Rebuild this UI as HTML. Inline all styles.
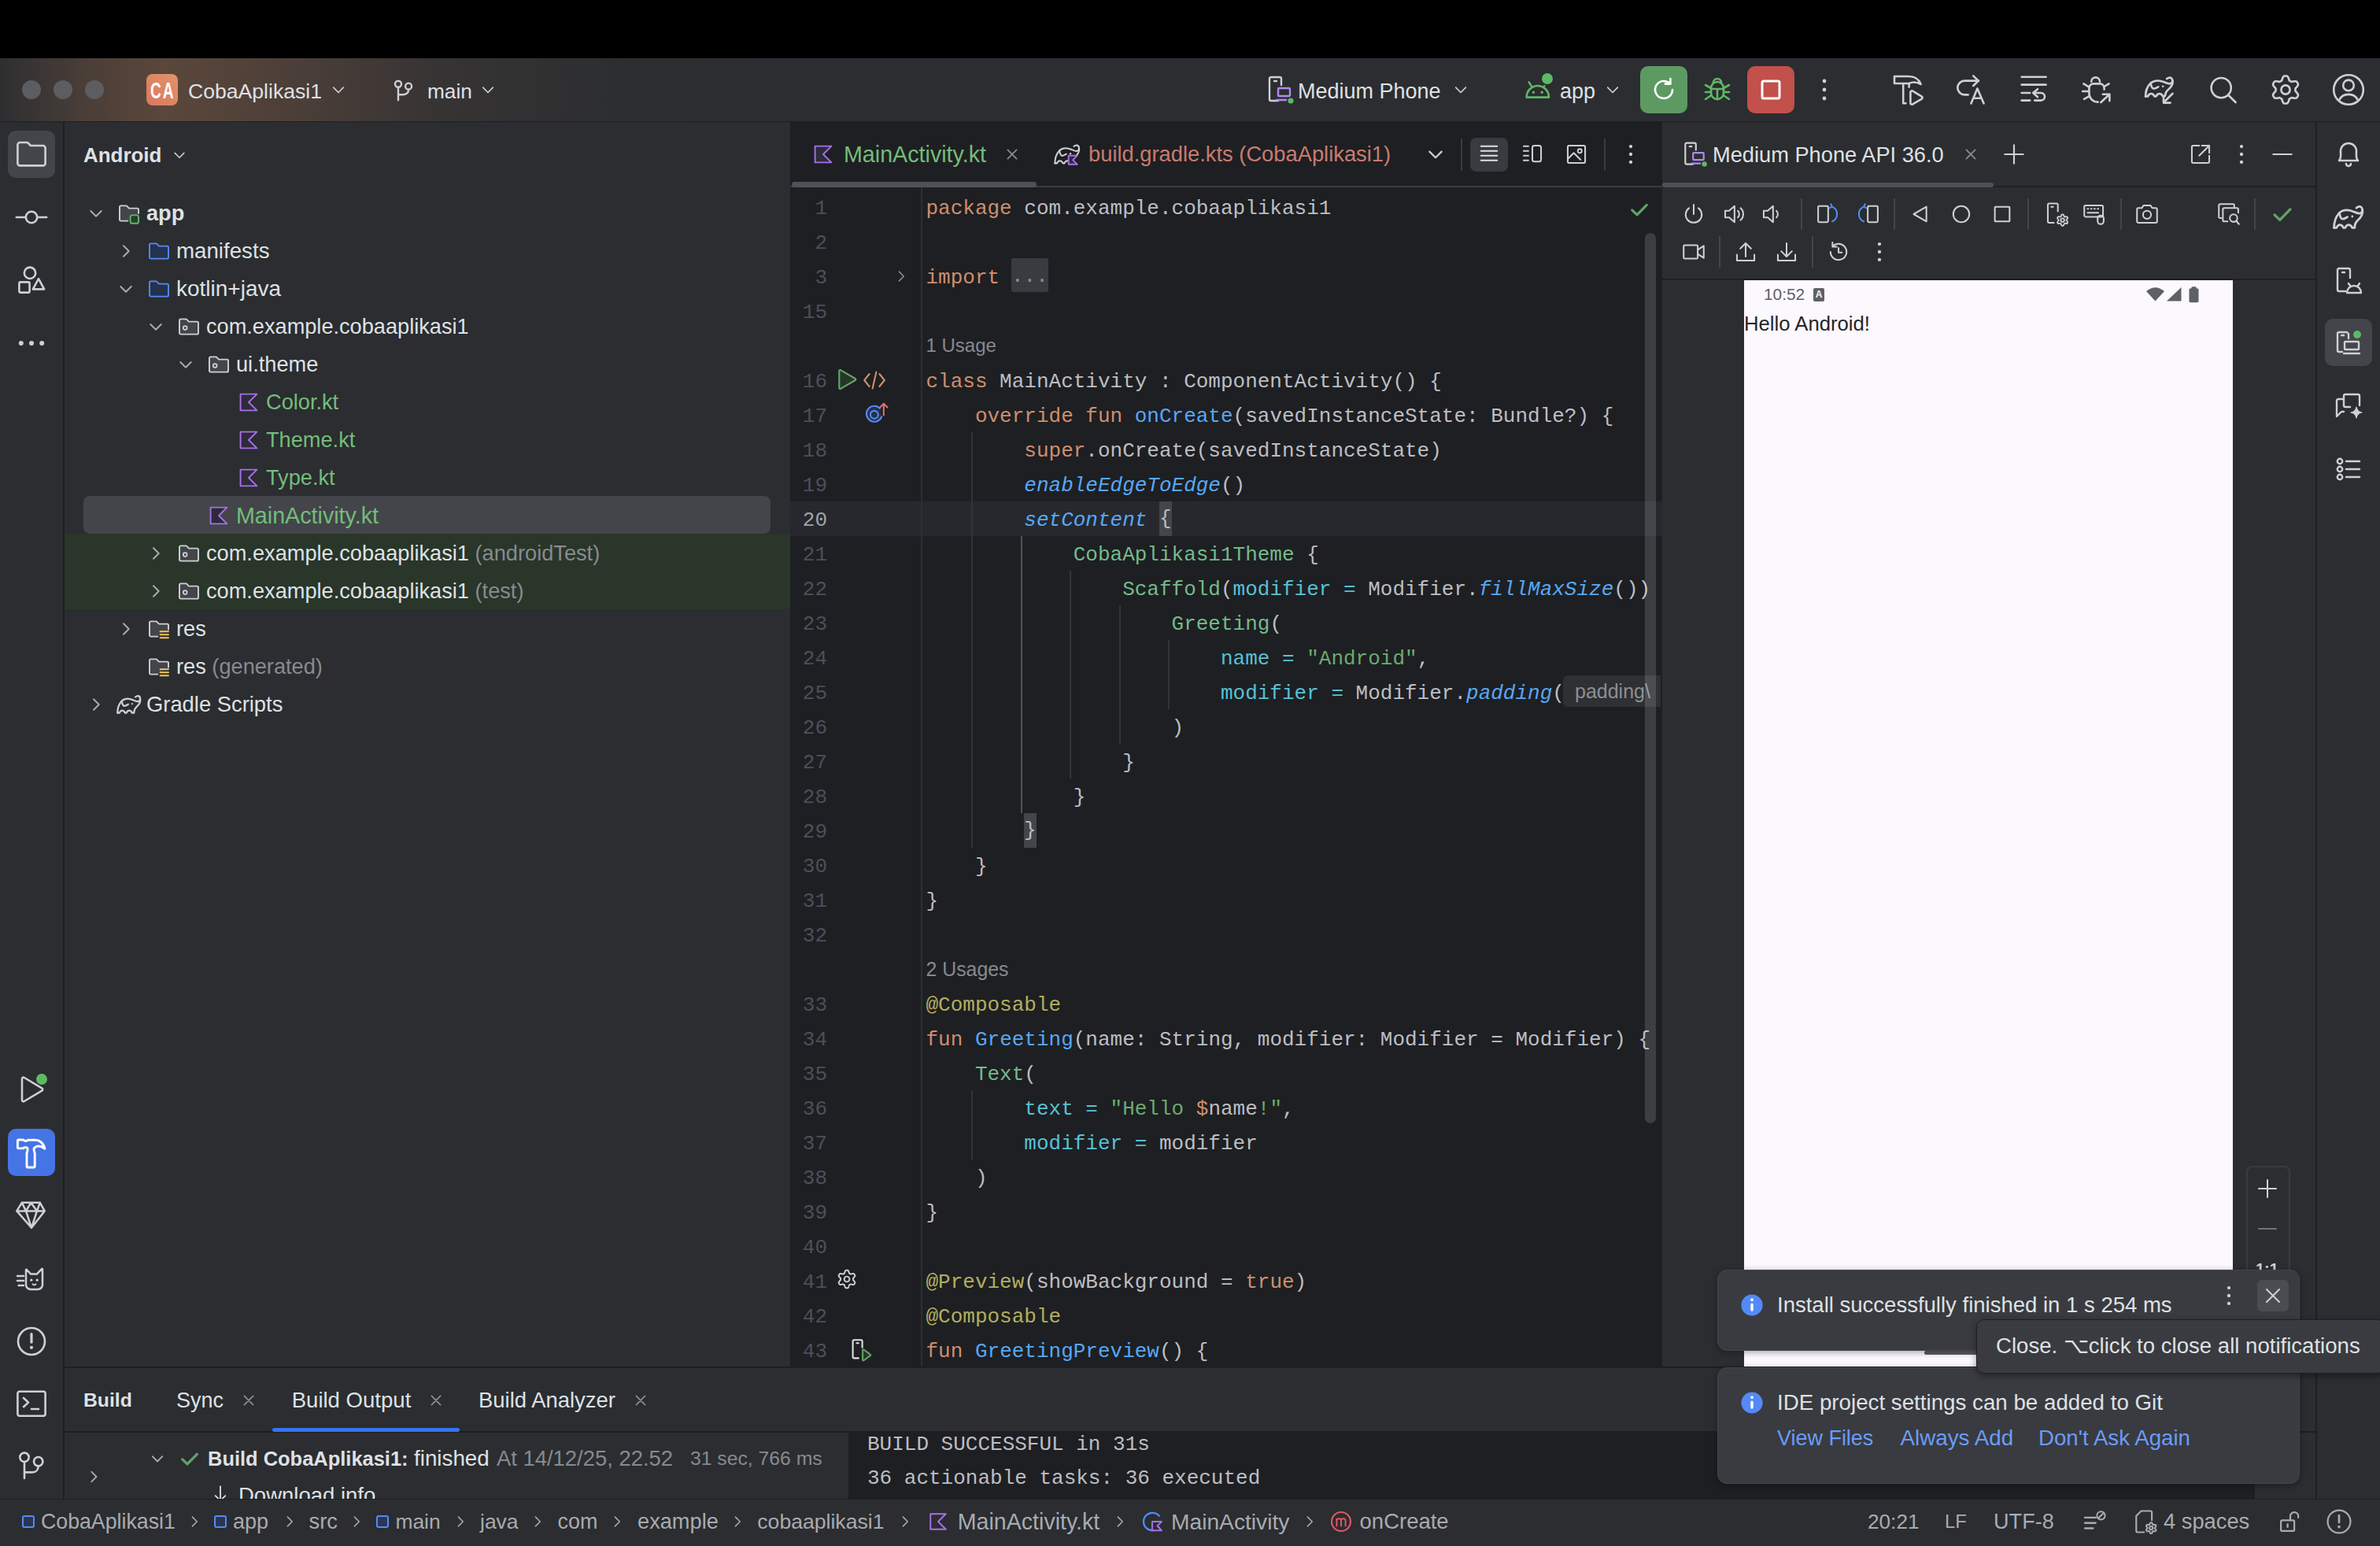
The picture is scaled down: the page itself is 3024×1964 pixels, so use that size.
<!DOCTYPE html><html><head><meta charset="utf-8"><style>html,body{margin:0;padding:0;width:3024px;height:1964px;overflow:hidden;background:#000}body{position:relative}</style></head><body><div style="position:absolute;left:0px;top:0px;width:3024px;height:1964px;background:#000;border-radius:0px;"></div>
<div style="position:absolute;left:0px;top:74px;width:3024px;height:80px;background:#2B2D30;border-radius:0px;"></div>
<div style="position:absolute;left:0px;top:74px;width:1100px;height:80px;background:linear-gradient(90deg, rgba(100,78,64,0.05) 0px, rgba(100,76,62,0.55) 110px, rgba(104,78,62,0.78) 210px, rgba(96,74,62,0.6) 380px, rgba(80,66,60,0.3) 560px, rgba(60,56,54,0.08) 780px, rgba(43,45,48,0) 950px);border-radius:0px;"></div>
<div style="position:absolute;left:0px;top:154px;width:3024px;height:1px;background:#1E1F22;border-radius:0px;"></div>
<div style="position:absolute;left:0px;top:155px;width:3024px;height:1750px;background:#2B2D30;border-radius:0px;"></div>
<div style="position:absolute;left:80px;top:155px;width:2px;height:1750px;background:#1E1F22;border-radius:0px;"></div>
<div style="position:absolute;left:2942px;top:155px;width:2px;height:1750px;background:#1E1F22;border-radius:0px;"></div>
<div style="position:absolute;left:1004px;top:155px;width:1108px;height:1582px;background:#1E1F22;border-radius:0px;"></div>
<div style="position:absolute;left:2110px;top:155px;width:2px;height:1582px;background:#1E1F22;border-radius:0px;"></div>
<div style="position:absolute;left:82px;top:1736px;width:2860px;height:2px;background:#1E1F22;border-radius:0px;"></div>
<div style="position:absolute;left:82px;top:1818px;width:2860px;height:2px;background:#1E1F22;border-radius:0px;"></div>
<div style="position:absolute;left:1078px;top:1820px;width:1787px;height:85px;background:#1E1F22;border-radius:0px;"></div>
<div style="position:absolute;left:0px;top:1904px;width:3024px;height:1px;background:#1E1F22;border-radius:0px;"></div>
<div style="position:absolute;left:0px;top:1905px;width:3024px;height:59px;background:#2B2D30;border-radius:0px;"></div>
<div style="position:absolute;left:28px;top:102px;width:24px;height:24px;background:#5B5D61;border-radius:12px;"></div>
<div style="position:absolute;left:68px;top:102px;width:24px;height:24px;background:#5B5D61;border-radius:12px;"></div>
<div style="position:absolute;left:108px;top:102px;width:24px;height:24px;background:#5B5D61;border-radius:12px;"></div>
<div style="position:absolute;left:186px;top:94px;width:40px;height:40px;background:linear-gradient(225deg,#E3936A,#D9785E);border-radius:8px;"></div>
<div style="position:absolute;left:191px;top:95.0px;height:40px;line-height:40px;font-family:'Liberation Sans', sans-serif;font-size:29px;color:#FFF;font-weight:bold;white-space:pre;transform:scaleX(0.66);transform-origin:0 50%;letter-spacing:3px">CA</div>
<div id="ma69acb43" style="position:absolute;left:239px;top:96.0px;height:40px;line-height:40px;font-family:'Liberation Sans', sans-serif;font-size:26.6px;color:#DFE1E5;font-weight:normal;white-space:pre;">CobaAplikasi1</div>
<svg style="position:absolute;left:416.0px;top:100.0px;overflow:visible;" width="28" height="28" viewBox="0 0 20 20" fill="none" stroke-linecap="round" stroke-linejoin="round"><path d="M5.5 8 L10 12.5 L14.5 8" stroke="#CED0D6" stroke-width="1.2"/></svg>
<svg style="position:absolute;left:494.0px;top:95.0px;overflow:visible;" width="38" height="38" viewBox="0 0 20 20" fill="none" stroke-linecap="round" stroke-linejoin="round"><circle cx="6.3" cy="6.2" r="2.1" stroke="#CED0D6" stroke-width="1.25"/><circle cx="13.2" cy="7.7" r="2.1" stroke="#CED0D6" stroke-width="1.25"/><path d="M6.3 8.3 V17 M6.3 13.3 H9.5 C11.8 13.3 13.2 12 13.2 9.8" stroke="#CED0D6" stroke-width="1.25"/></svg>
<div id="m93c4d54a" style="position:absolute;left:543px;top:96.0px;height:40px;line-height:40px;font-family:'Liberation Sans', sans-serif;font-size:26.22px;color:#DFE1E5;font-weight:normal;white-space:pre;">main</div>
<svg style="position:absolute;left:606.0px;top:100.0px;overflow:visible;" width="28" height="28" viewBox="0 0 20 20" fill="none" stroke-linecap="round" stroke-linejoin="round"><path d="M5.5 8 L10 12.5 L14.5 8" stroke="#CED0D6" stroke-width="1.2"/></svg>
<svg style="position:absolute;left:1606.0px;top:94.0px;overflow:visible;" width="40" height="40" viewBox="0 0 20 20" fill="none" stroke-linecap="round" stroke-linejoin="round"><path d="M9 17 H4.5 a1 1 0 0 1 -1 -1 V3 a1 1 0 0 1 1 -1 H10 a1 1 0 0 1 1 1 V7" stroke="#CED0D6" stroke-width="1.2"/><path d="M6.5 4.5 H8" stroke="#CED0D6" stroke-width="1.2"/><rect x="9" y="9" width="7.5" height="5" rx="0.5" stroke="#B18BF0" stroke-width="1.2"/><path d="M8 16.5 H17" stroke="#B18BF0" stroke-width="1.2"/><circle cx="17" cy="17" r="2.2" fill="#5FB865" stroke="#2B2D30" stroke-width="0.8"/></svg>
<div id="m9ce95f1b" style="position:absolute;left:1649px;top:96.0px;height:40px;line-height:40px;font-family:'Liberation Sans', sans-serif;font-size:27.0px;color:#DFE1E5;font-weight:normal;white-space:pre;">Medium Phone</div>
<svg style="position:absolute;left:1842.0px;top:100.0px;overflow:visible;" width="28" height="28" viewBox="0 0 20 20" fill="none" stroke-linecap="round" stroke-linejoin="round"><path d="M5.5 8 L10 12.5 L14.5 8" stroke="#CED0D6" stroke-width="1.2"/></svg>
<svg style="position:absolute;left:1934.0px;top:94.0px;overflow:visible;" width="40" height="40" viewBox="0 0 20 20" fill="none" stroke-linecap="round" stroke-linejoin="round"><path d="M2.8 14.8 A7.1 7.3 0 0 1 17 14.8 Z" stroke="#5FB865" stroke-width="1.3"/><path d="M4.3 5.2 L6.3 8.3 M15.7 5.2 L13.7 8.3" stroke="#5FB865" stroke-width="1.3"/><circle cx="7.2" cy="11.6" r="0.85" fill="#5FB865"/><circle cx="12.6" cy="11.6" r="0.85" fill="#5FB865"/></svg>
<div style="position:absolute;left:1959px;top:93px;width:14px;height:14px;background:#5FB865;border-radius:7px;box-shadow:0 0 0 2px #2B2D30"></div>
<div id="mccfd4fe5" style="position:absolute;left:1982px;top:96.0px;height:40px;line-height:40px;font-family:'Liberation Sans', sans-serif;font-size:26.97px;color:#DFE1E5;font-weight:normal;white-space:pre;">app</div>
<svg style="position:absolute;left:2035.0px;top:100.0px;overflow:visible;" width="28" height="28" viewBox="0 0 20 20" fill="none" stroke-linecap="round" stroke-linejoin="round"><path d="M5.5 8 L10 12.5 L14.5 8" stroke="#CED0D6" stroke-width="1.2"/></svg>
<div style="position:absolute;left:2084px;top:84px;width:60px;height:60px;background:#5D9A62;border-radius:10px;"></div>
<svg style="position:absolute;left:2094.0px;top:94.0px;overflow:visible;" width="40" height="40" viewBox="0 0 20 20" fill="none" stroke-linecap="round" stroke-linejoin="round"><path d="M15.5 10 a5.5 5.5 0 1 1 -1.6 -3.9" stroke="#FFFFFF" stroke-width="1.3"/><path d="M14.2 3 V6.3 H10.9" stroke="#FFFFFF" stroke-width="1.3"/></svg>
<svg style="position:absolute;left:2162.0px;top:94.0px;overflow:visible;" width="40" height="40" viewBox="0 0 20 20" fill="none" stroke-linecap="round" stroke-linejoin="round"><path d="M6 9 a4 4 0 0 1 8 0 V12 a4 4 0 0 1 -8 0 Z" stroke="#5FB865" stroke-width="1.3"/><path d="M7.5 5.5 a2.5 2.5 0 0 1 5 0" stroke="#5FB865" stroke-width="1.3"/><path d="M6 9.5 H10 H14 M2.5 7 L6 9 M17.5 7 L14 9 M2.5 11.5 H6 M17.5 11.5 H14 M2.5 16 L6.2 13.5 M17.5 16 L13.8 13.5 M10 9.5 V16" stroke="#5FB865" stroke-width="1.3"/></svg>
<div style="position:absolute;left:2220px;top:84px;width:60px;height:60px;background:#C2504B;border-radius:10px;"></div>
<svg style="position:absolute;left:2230.0px;top:94.0px;overflow:visible;" width="40" height="40" viewBox="0 0 20 20" fill="none" stroke-linecap="round" stroke-linejoin="round"><rect x="4.5" y="4.5" width="11" height="11" rx="1" stroke="#FFFFFF" stroke-width="1.5"/></svg>
<svg style="position:absolute;left:2298.0px;top:94.0px;overflow:visible;" width="40" height="40" viewBox="0 0 20 20" fill="none" stroke-linecap="round" stroke-linejoin="round"><circle cx="10" cy="4.5" r="1.2" fill="#CED0D6"/><circle cx="10" cy="10" r="1.2" fill="#CED0D6"/><circle cx="10" cy="15.5" r="1.2" fill="#CED0D6"/></svg>
<svg style="position:absolute;left:2405.0px;top:94.0px;overflow:visible;" width="40" height="40" viewBox="0 0 20 20" fill="none" stroke-linecap="round" stroke-linejoin="round"><path d="M1 1.5 H10 C13.5 1.5 16.5 3 17.8 6.5 C15.5 5.2 12.5 5 10.3 6 H1 Z" stroke="#CED0D6" stroke-width="1.3"/><path d="M6.6 6.2 V18.6 H8.2 M10.3 6.2 V8.3" stroke="#CED0D6" stroke-width="1.3"/><path d="M11.2 11.6 a0.9 0.9 0 0 1 1.4 -0.8 L18.4 14.3 a0.9 0.9 0 0 1 0 1.5 L12.6 19.2 a0.9 0.9 0 0 1 -1.4 -0.8 Z" stroke="#CED0D6" stroke-width="1.3"/></svg>
<svg style="position:absolute;left:2484.0px;top:94.0px;overflow:visible;" width="40" height="40" viewBox="0 0 20 20" fill="none" stroke-linecap="round" stroke-linejoin="round"><path d="M8.3 13.2 H6.1 A4.45 4.45 0 0 1 6.1 4.3 H15" stroke="#CED0D6" stroke-width="1.3"/><path d="M11.6 1.2 L14.9 4.3 L11.6 7.5" stroke="#CED0D6" stroke-width="1.3"/><path d="M10.2 18.7 L14.2 9.2 L18.3 18.7 M11.6 15.4 H16.8" stroke="#CED0D6" stroke-width="1.3"/></svg>
<svg style="position:absolute;left:2564.0px;top:94.0px;overflow:visible;" width="40" height="40" viewBox="0 0 20 20" fill="none" stroke-linecap="round" stroke-linejoin="round"><path d="M2.3 1.9 H17.8 M2.3 6.8 H17.8 M2.3 12 H7.6 M2.3 16.8 H7.6" stroke="#CED0D6" stroke-width="1.3"/><path d="M12.5 9.6 L9.6 12 L12.5 14.6 M9.6 12 H14.6 A2.4 2.4 0 0 1 14.6 16.8 H10.6" stroke="#CED0D6" stroke-width="1.3"/></svg>
<svg style="position:absolute;left:2644.0px;top:94.0px;overflow:visible;" width="40" height="40" viewBox="0 0 20 20" fill="none" stroke-linecap="round" stroke-linejoin="round"><path d="M6.6 4.9 A2.7 2.7 0 0 1 12 4.9" stroke="#CED0D6" stroke-width="1.3"/><path d="M10.8 17.8 C7.5 17.8 5.2 15.5 5.2 12 V9 C5.2 7.3 6.5 6.2 8 6.2 H12 C13.5 6.2 14.8 7.3 14.8 9 V9.8" stroke="#CED0D6" stroke-width="1.3"/><path d="M1.7 6.2 L5.2 8.3 M1.1 11 H5.2 M2 15.9 L5.4 14.1 M17.8 6.2 L14.8 8" stroke="#CED0D6" stroke-width="1.3"/><path d="M12.7 18 L18.2 12.9 M13.9 12.9 H18.2 V17.1" stroke="#CED0D6" stroke-width="1.3"/></svg>
<svg style="position:absolute;left:2724.0px;top:94.0px;overflow:visible;" width="40" height="40" viewBox="0 0 20 20" fill="none" stroke-linecap="round" stroke-linejoin="round"><g transform="translate(0.3,-0.5) scale(0.95,0.88)"><path d="M0.8 16.7 C0.8 12 2.5 9 4.2 7.2 C6 5.5 9 5 12 6 C14 6.6 15.5 7.6 16.8 7.6 C18.3 7.6 18.8 6.5 18.8 5.3 C18.8 3.9 17.8 3.2 16.9 3.2 C16 3.2 15.4 3.7 15 4.1" stroke="#CED0D6" stroke-width="1.45"/><path d="M18.9 5.5 C19.3 8.5 17.5 10.5 15.8 12 C14.5 13.2 13.9 14.5 13.9 16.7 H12.4 C11.8 15.3 11 14.8 10.1 14.8 C9.2 14.8 8.4 15.3 7.9 16.7 H6.8 C6.2 15.3 5.4 14.8 4.5 14.8 C3.6 14.8 2.9 15.3 2.4 16.7 H0.8" stroke="#CED0D6" stroke-width="1.45"/><path d="M4.2 7.2 C4.5 9 4.8 11 6.2 11.1 C7.3 11.2 8.3 10.4 9.3 9.8" stroke="#CED0D6" stroke-width="1.45"/><circle cx="12.4" cy="9.5" r="0.7" fill="#CED0D6"/></g><path d="M18.3 12.4 L12.5 18.1" stroke="#2B2D30" stroke-width="3.5"/><path d="M18.3 12.4 L12.5 18.1 M12.5 14 V18.3 H16.8" stroke="#CED0D6" stroke-width="1.3"/></svg>
<svg style="position:absolute;left:2804.0px;top:94.0px;overflow:visible;" width="40" height="40" viewBox="0 0 20 20" fill="none" stroke-linecap="round" stroke-linejoin="round"><circle cx="9.1" cy="8.8" r="6.3" stroke="#CED0D6" stroke-width="1.3"/><path d="M13.6 13.4 L18.3 18" stroke="#CED0D6" stroke-width="1.3"/></svg>
<svg style="position:absolute;left:2884.0px;top:94.0px;overflow:visible;" width="40" height="40" viewBox="0 0 20 20" fill="none" stroke-linecap="round" stroke-linejoin="round"><path d="M10.00 1.25 L10.38 1.26 L10.76 1.28 L11.13 1.38 L11.45 1.78 L11.72 2.25 L11.94 2.76 L12.12 3.26 L12.28 3.75 L12.41 4.17 L12.64 4.34 L12.89 4.46 L13.12 4.59 L13.36 4.73 L13.58 4.88 L13.84 5.00 L14.28 4.90 L14.77 4.79 L15.30 4.70 L15.85 4.64 L16.39 4.64 L16.90 4.71 L17.17 4.98 L17.38 5.30 L17.58 5.62 L17.76 5.96 L17.93 6.30 L18.03 6.67 L17.84 7.15 L17.57 7.61 L17.24 8.06 L16.90 8.47 L16.56 8.84 L16.25 9.18 L16.23 9.46 L16.24 9.73 L16.25 10.00 L16.24 10.27 L16.23 10.54 L16.25 10.82 L16.56 11.16 L16.90 11.53 L17.24 11.94 L17.57 12.39 L17.84 12.85 L18.03 13.33 L17.93 13.70 L17.76 14.04 L17.58 14.37 L17.38 14.70 L17.17 15.02 L16.90 15.29 L16.39 15.36 L15.85 15.36 L15.30 15.30 L14.77 15.21 L14.28 15.10 L13.84 15.00 L13.58 15.12 L13.36 15.27 L13.13 15.41 L12.89 15.54 L12.64 15.66 L12.41 15.83 L12.28 16.25 L12.12 16.74 L11.94 17.24 L11.72 17.75 L11.45 18.22 L11.13 18.62 L10.76 18.72 L10.38 18.74 L10.00 18.75 L9.62 18.74 L9.24 18.72 L8.87 18.62 L8.55 18.22 L8.28 17.75 L8.06 17.24 L7.88 16.74 L7.72 16.25 L7.59 15.83 L7.36 15.66 L7.11 15.54 L6.87 15.41 L6.64 15.27 L6.42 15.12 L6.16 15.00 L5.72 15.10 L5.23 15.21 L4.70 15.30 L4.15 15.36 L3.61 15.36 L3.10 15.29 L2.83 15.02 L2.62 14.70 L2.42 14.38 L2.24 14.04 L2.07 13.70 L1.97 13.33 L2.16 12.85 L2.43 12.39 L2.76 11.94 L3.10 11.53 L3.44 11.16 L3.75 10.82 L3.77 10.54 L3.76 10.27 L3.75 10.00 L3.76 9.73 L3.77 9.46 L3.75 9.18 L3.44 8.84 L3.10 8.47 L2.76 8.06 L2.43 7.61 L2.16 7.15 L1.97 6.67 L2.07 6.30 L2.24 5.96 L2.42 5.63 L2.62 5.30 L2.83 4.98 L3.10 4.71 L3.61 4.64 L4.15 4.64 L4.70 4.70 L5.23 4.79 L5.72 4.90 L6.16 5.00 L6.42 4.88 L6.64 4.73 L6.88 4.59 L7.11 4.46 L7.36 4.34 L7.59 4.17 L7.72 3.75 L7.88 3.26 L8.06 2.76 L8.28 2.25 L8.55 1.78 L8.87 1.38 L9.24 1.28 L9.62 1.26Z" stroke="#CED0D6" stroke-width="1.3" stroke-linejoin="round"/><circle cx="10" cy="10" r="2.8" stroke="#CED0D6" stroke-width="1.3"/></svg>
<svg style="position:absolute;left:2964.0px;top:94.0px;overflow:visible;" width="40" height="40" viewBox="0 0 20 20" fill="none" stroke-linecap="round" stroke-linejoin="round"><circle cx="10" cy="10" r="9.4" stroke="#CED0D6" stroke-width="1.3"/><circle cx="10" cy="7.2" r="3.4" stroke="#CED0D6" stroke-width="1.3"/><path d="M4.2 16.3 C6.5 11.8 13.5 11.8 15.8 16.3" stroke="#CED0D6" stroke-width="1.3"/></svg>
<div style="position:absolute;left:10px;top:166px;width:60px;height:60px;background:#43454A;border-radius:10px;"></div>
<svg style="position:absolute;left:20.0px;top:175.0px;overflow:visible;" width="40" height="40" viewBox="0 0 20 20" fill="none" stroke-linecap="round" stroke-linejoin="round"><path d="M1.2 4.5 a1.5 1.5 0 0 1 1.5 -1.5 H7.5 L9.5 5 H17.3 a1.5 1.5 0 0 1 1.5 1.5 V16.2 a1.5 1.5 0 0 1 -1.5 1.5 H2.7 a1.5 1.5 0 0 1 -1.5 -1.5 Z" stroke="#CED0D6" fill="none" stroke-width="1.3"/></svg>
<svg style="position:absolute;left:20.0px;top:256.0px;overflow:visible;" width="40" height="40" viewBox="0 0 20 20" fill="none" stroke-linecap="round" stroke-linejoin="round"><circle cx="10" cy="10" r="3.6" stroke="#CED0D6" stroke-width="1.3"/><path d="M0.4 10 H6.4 M13.6 10 H19.6" stroke="#CED0D6" stroke-width="1.3"/></svg>
<svg style="position:absolute;left:20.0px;top:335.0px;overflow:visible;" width="40" height="40" viewBox="0 0 20 20" fill="none" stroke-linecap="round" stroke-linejoin="round"><circle cx="9" cy="5.9" r="3.6" stroke="#CED0D6" stroke-width="1.3"/><rect x="2.2" y="11.7" width="6.6" height="6.6" rx="0.8" stroke="#CED0D6" stroke-width="1.3"/><path d="M14.5 9.6 L18.1 16.2 H10.9 Z" stroke="#CED0D6" stroke-width="1.3"/></svg>
<svg style="position:absolute;left:20.0px;top:416.0px;overflow:visible;" width="40" height="40" viewBox="0 0 20 20" fill="none" stroke-linecap="round" stroke-linejoin="round"><circle cx="3.4" cy="10" r="1.5" fill="#CED0D6"/><circle cx="10" cy="10" r="1.5" fill="#CED0D6"/><circle cx="16.6" cy="10" r="1.5" fill="#CED0D6"/></svg>
<svg style="position:absolute;left:20.0px;top:1364.0px;overflow:visible;" width="40" height="40" viewBox="0 0 20 20" fill="none" stroke-linecap="round" stroke-linejoin="round"><path d="M4 3.3 a0.9 0.9 0 0 1 1.4 -0.8 L16.6 9.2 a0.9 0.9 0 0 1 0 1.6 L5.4 17.5 a0.9 0.9 0 0 1 -1.4 -0.8 Z" stroke="#CED0D6" stroke-width="1.3"/></svg>
<div style="position:absolute;left:45.6px;top:1364.3px;width:14px;height:14px;background:#5FB865;border-radius:7px;"></div>
<div style="position:absolute;left:10px;top:1434px;width:60px;height:60px;background:#4574E5;border-radius:10px;"></div>
<svg style="position:absolute;left:20.0px;top:1445.5px;overflow:visible;" width="40" height="40" viewBox="0 0 20 20" fill="none" stroke-linecap="round" stroke-linejoin="round"><path d="M1.2 1.5 a0.5 0.5 0 0 1 0.5 -0.5 H4.8 L5.5 1.6 H7 L7.8 1.1 H12 C15 1.1 17.5 3 18.5 6.6 C16.5 5.2 14.5 4.8 13.2 5.2 L11.6 6.2 V7.8 L12.1 9.5 V18 a0.5 0.5 0 0 1 -0.5 0.5 H7.5 a0.5 0.5 0 0 1 -0.5 -0.5 V9.5 L7.5 7.8 V6.4 L6.8 5.8 H5.5 L4.8 6.45 H1.7 a0.5 0.5 0 0 1 -0.5 -0.5 Z" stroke="#FFFFFF" stroke-width="1.45"/></svg>
<svg style="position:absolute;left:20.0px;top:1523.0px;overflow:visible;" width="40" height="40" viewBox="0 0 20 20" fill="none" stroke-linecap="round" stroke-linejoin="round"><path d="M3.9 2.4 H15.4 L18.35 7.7 L10 18.4 L0.65 7.7 Z M0.65 7.7 H18.35 M6.5 7.7 L10 18.4 L13.5 7.7 M3.9 2.4 L6.5 7.7 L9.65 2.4 L13.5 7.7 L15.4 2.4" stroke="#CED0D6" stroke-width="1.25"/></svg>
<svg style="position:absolute;left:20.0px;top:1605.0px;overflow:visible;" width="40" height="40" viewBox="0 0 20 20" fill="none" stroke-linecap="round" stroke-linejoin="round"><path d="M7 4 L9.6 6.8 H13.4 L16.5 3.5 a0.3 0.3 0 0 1 0.5 0.2 V13.5 a3 3 0 0 1 -3 3 H9.5 a3 3 0 0 1 -3 -3 V4.3 a0.3 0.3 0 0 1 0.5 -0.3 Z" stroke="#CED0D6" stroke-width="1.25"/><path d="M1 8 H5 M1 11 H5 M1.8 14 H5" stroke="#CED0D6" stroke-width="1.25"/><circle cx="9.9" cy="10.6" r="0.8" fill="#CED0D6"/><circle cx="13.6" cy="10.6" r="0.8" fill="#CED0D6"/><path d="M10.8 13.2 Q11.75 14.2 12.7 13.2" stroke="#CED0D6" stroke-width="1"/></svg>
<svg style="position:absolute;left:20.0px;top:1684.0px;overflow:visible;" width="40" height="40" viewBox="0 0 20 20" fill="none" stroke-linecap="round" stroke-linejoin="round"><circle cx="10" cy="10" r="8.5" stroke="#CED0D6" stroke-width="1.3"/><path d="M10 5.3 V10.6" stroke="#CED0D6" stroke-width="1.6"/><circle cx="10" cy="13.9" r="1.05" fill="#CED0D6"/></svg>
<svg style="position:absolute;left:20.0px;top:1764.0px;overflow:visible;" width="40" height="40" viewBox="0 0 20 20" fill="none" stroke-linecap="round" stroke-linejoin="round"><rect x="1.2" y="1.9" width="17.6" height="15.45" rx="1.2" stroke="#CED0D6" stroke-width="1.3"/><path d="M5 6 L8 8.8 L5 11.6 M10 13 H14.5" stroke="#CED0D6" stroke-width="1.3"/></svg>
<svg style="position:absolute;left:20.0px;top:1842.0px;overflow:visible;" width="40" height="40" viewBox="0 0 20 20" fill="none" stroke-linecap="round" stroke-linejoin="round"><circle cx="5.5" cy="4.65" r="2.85" stroke="#CED0D6" stroke-width="1.3"/><circle cx="14.35" cy="7.35" r="2.85" stroke="#CED0D6" stroke-width="1.3"/><path d="M5.5 7.5 V18 M5.5 14.2 H10.5 C12.8 14.2 14.35 12.6 14.35 10.2" stroke="#CED0D6" stroke-width="1.3"/></svg>
<svg style="position:absolute;left:2964.0px;top:175.0px;overflow:visible;" width="40" height="40" viewBox="0 0 20 20" fill="none" stroke-linecap="round" stroke-linejoin="round"><path d="M4 14.5 C5.5 13 5 11 5 8.5 a5 5 0 0 1 10 0 C15 11 14.5 13 16 14.5 Z" stroke="#CED0D6" stroke-width="1.3"/><path d="M8.5 16.5 a1.5 1.5 0 0 0 3 0" stroke="#CED0D6" stroke-width="1.3"/></svg>
<svg style="position:absolute;left:2964.0px;top:256.0px;overflow:visible;" width="40" height="40" viewBox="0 0 20 20" fill="none" stroke-linecap="round" stroke-linejoin="round"><path d="M0.8 16.7 C0.8 12 2.5 9 4.2 7.2 C6 5.5 9 5 12 6 C14 6.6 15.5 7.6 16.8 7.6 C18.3 7.6 18.8 6.5 18.8 5.3 C18.8 3.9 17.8 3.2 16.9 3.2 C16 3.2 15.4 3.7 15 4.1" stroke="#CED0D6" stroke-width="1.4"/><path d="M18.9 5.5 C19.3 8.5 17.5 10.5 15.8 12 C14.5 13.2 13.9 14.5 13.9 16.7 H12.4 C11.8 15.3 11 14.8 10.1 14.8 C9.2 14.8 8.4 15.3 7.9 16.7 H6.8 C6.2 15.3 5.4 14.8 4.5 14.8 C3.6 14.8 2.9 15.3 2.4 16.7 H0.8" stroke="#CED0D6" stroke-width="1.4"/><path d="M4.2 7.2 C4.5 9 4.8 11 6.2 11.1 C7.3 11.2 8.3 10.4 9.3 9.8" stroke="#CED0D6" stroke-width="1.4"/><circle cx="12.4" cy="9.5" r="0.7" fill="#CED0D6"/></svg>
<svg style="position:absolute;left:2964.0px;top:337.0px;overflow:visible;" width="40" height="40" viewBox="0 0 20 20" fill="none" stroke-linecap="round" stroke-linejoin="round"><path d="M8 16.5 H4 a1 1 0 0 1 -1 -1 V3 a1 1 0 0 1 1 -1 H10 a1 1 0 0 1 1 1 V8" stroke="#CED0D6" stroke-width="1.2"/><path d="M6 4.5 H7.5" stroke="#CED0D6" stroke-width="1.2"/><path d="M9 17.5 a4.5 4.5 0 0 1 9 0 Z M10 11.5 L11 13 M17 11.5 L16 13" stroke="#CED0D6" stroke-width="1.2"/></svg>
<div style="position:absolute;left:2954px;top:405px;width:60px;height:60px;background:#43454A;border-radius:10px;"></div>
<svg style="position:absolute;left:2964.0px;top:416.0px;overflow:visible;" width="40" height="40" viewBox="0 0 20 20" fill="none" stroke-linecap="round" stroke-linejoin="round"><path d="M6 15.5 H4 a1 1 0 0 1 -1 -1 V4 a1 1 0 0 1 1 -1 H9 L10 4 V7" stroke="#CED0D6" stroke-width="1.2"/><path d="M5.5 5 H7" stroke="#CED0D6" stroke-width="1.2"/><rect x="7.5" y="9" width="9" height="5" rx="0.5" stroke="#CED0D6" stroke-width="1.2"/><path d="M7 16.5 H17" stroke="#CED0D6" stroke-width="1.2"/><circle cx="15.5" cy="4.5" r="2.5" fill="#5FB865"/></svg>
<svg style="position:absolute;left:2964.0px;top:495.0px;overflow:visible;" width="40" height="40" viewBox="0 0 20 20" fill="none" stroke-linecap="round" stroke-linejoin="round"><path d="M7 6 H3.5 a1 1 0 0 0 -1 1 V17 L5.5 14 H7" stroke="#CED0D6" stroke-width="1.2"/><path d="M8 3 H16 a1 1 0 0 1 1 1 V10 M8 3 a1 1 0 0 0 -1 1 V10 a1 1 0 0 0 1 1 H11" stroke="#CED0D6" stroke-width="1.2"/><path d="M15 11 Q15.5 14 18.5 14.5 Q15.5 15 15 18 Q14.5 15 11.5 14.5 Q14.5 14 15 11 Z" fill="#CED0D6" stroke="#CED0D6" stroke-width="0.6"/></svg>
<svg style="position:absolute;left:2964.0px;top:576.0px;overflow:visible;" width="40" height="40" viewBox="0 0 20 20" fill="none" stroke-linecap="round" stroke-linejoin="round"><circle cx="4.5" cy="5" r="1.6" stroke="#CED0D6" stroke-width="1.2"/><circle cx="4.5" cy="10" r="1.6" stroke="#CED0D6" stroke-width="1.2"/><circle cx="4.5" cy="15" r="1.6" stroke="#CED0D6" stroke-width="1.2"/><path d="M8.5 5 H17 M8.5 10 H17 M8.5 15 H17" stroke="#CED0D6" stroke-width="1.3"/></svg>
<div id="mb31fb8c4" style="position:absolute;left:106px;top:177.0px;height:40px;line-height:40px;font-family:'Liberation Sans', sans-serif;font-size:25.94px;color:#DFE1E5;font-weight:bold;white-space:pre;">Android</div>
<svg style="position:absolute;left:215.0px;top:184.0px;overflow:visible;" width="26" height="26" viewBox="0 0 20 20" fill="none" stroke-linecap="round" stroke-linejoin="round"><path d="M5.5 8 L10 12.5 L14.5 8" stroke="#CED0D6" stroke-width="1.2"/></svg>
<div style="position:absolute;left:82px;top:678px;width:922px;height:96px;background:#293629;border-radius:0px;"></div>
<div style="position:absolute;left:106px;top:630px;width:873px;height:48px;background:#43454A;border-radius:8px;"></div>
<svg style="position:absolute;left:106.6px;top:256.0px;overflow:visible;" width="30" height="30" viewBox="0 0 20 20" fill="none" stroke-linecap="round" stroke-linejoin="round"><path d="M5.5 8 L10 12.5 L14.5 8" stroke="#A8ABB0" stroke-width="1.3"/></svg>
<svg style="position:absolute;left:148.0px;top:255.0px;overflow:visible;" width="32" height="32" viewBox="0 0 20 20" fill="none" stroke-linecap="round" stroke-linejoin="round"><path d="M9 16 H3.5 a1 1 0 0 1 -1 -1 V5 a1 1 0 0 1 1 -1 H8 L10 6 H16.5 a1 1 0 0 1 1 1 V10" stroke="#CED0D6" fill="#43454A" stroke-width="1.2"/><rect x="11" y="11.5" width="6.5" height="6.5" rx="1.5" stroke="#5FB865" fill="#2B3A2E" stroke-width="1.2"/></svg>
<div style="position:absolute;left:186px;top:251.0px;height:40px;line-height:40px;font-family:'Liberation Sans', sans-serif;font-size:27.2px;color:#DFE1E5;font-weight:normal;white-space:pre;"><span style="color:#DFE1E5;font-weight:bold">app</span></div>
<svg style="position:absolute;left:144.6px;top:304.0px;overflow:visible;" width="30" height="30" viewBox="0 0 20 20" fill="none" stroke-linecap="round" stroke-linejoin="round"><path d="M8 5.5 L12.5 10 L8 14.5" stroke="#A8ABB0" stroke-width="1.3"/></svg>
<svg style="position:absolute;left:186.0px;top:303.0px;overflow:visible;" width="32" height="32" viewBox="0 0 20 20" fill="none" stroke-linecap="round" stroke-linejoin="round"><path d="M2.5 5 a1 1 0 0 1 1 -1 H8 L10 6 H16.5 a1 1 0 0 1 1 1 V15 a1 1 0 0 1 -1 1 H3.5 a1 1 0 0 1 -1 -1 Z" stroke="#548AF7" fill="#25324D" stroke-width="1.2"/></svg>
<div id="m243ea7fe" style="position:absolute;left:224px;top:299.0px;height:40px;line-height:40px;font-family:'Liberation Sans', sans-serif;font-size:27.7px;color:#DFE1E5;font-weight:normal;white-space:pre;"><span style="color:#DFE1E5;font-weight:normal">manifests</span></div>
<svg style="position:absolute;left:144.6px;top:352.0px;overflow:visible;" width="30" height="30" viewBox="0 0 20 20" fill="none" stroke-linecap="round" stroke-linejoin="round"><path d="M5.5 8 L10 12.5 L14.5 8" stroke="#A8ABB0" stroke-width="1.3"/></svg>
<svg style="position:absolute;left:186.0px;top:351.0px;overflow:visible;" width="32" height="32" viewBox="0 0 20 20" fill="none" stroke-linecap="round" stroke-linejoin="round"><path d="M2.5 5 a1 1 0 0 1 1 -1 H8 L10 6 H16.5 a1 1 0 0 1 1 1 V15 a1 1 0 0 1 -1 1 H3.5 a1 1 0 0 1 -1 -1 Z" stroke="#548AF7" fill="#25324D" stroke-width="1.2"/></svg>
<div id="m9104080c" style="position:absolute;left:224px;top:347.0px;height:40px;line-height:40px;font-family:'Liberation Sans', sans-serif;font-size:27.99px;color:#DFE1E5;font-weight:normal;white-space:pre;"><span style="color:#DFE1E5;font-weight:normal">kotlin+java</span></div>
<svg style="position:absolute;left:182.6px;top:400.0px;overflow:visible;" width="30" height="30" viewBox="0 0 20 20" fill="none" stroke-linecap="round" stroke-linejoin="round"><path d="M5.5 8 L10 12.5 L14.5 8" stroke="#A8ABB0" stroke-width="1.3"/></svg>
<svg style="position:absolute;left:224.0px;top:399.0px;overflow:visible;" width="32" height="32" viewBox="0 0 20 20" fill="none" stroke-linecap="round" stroke-linejoin="round"><path d="M2.5 5 a1 1 0 0 1 1 -1 H8 L10 6 H16.5 a1 1 0 0 1 1 1 V15 a1 1 0 0 1 -1 1 H3.5 a1 1 0 0 1 -1 -1 Z" stroke="#CED0D6" fill="#43454A" stroke-width="1.2"/><circle cx="7" cy="11" r="1.5" stroke="#CED0D6" stroke-width="1.1"/></svg>
<div id="m0665bff7" style="position:absolute;left:262px;top:395.0px;height:40px;line-height:40px;font-family:'Liberation Sans', sans-serif;font-size:27.17px;color:#DFE1E5;font-weight:normal;white-space:pre;"><span style="color:#DFE1E5;font-weight:normal">com.example.cobaaplikasi1</span></div>
<svg style="position:absolute;left:220.6px;top:448.0px;overflow:visible;" width="30" height="30" viewBox="0 0 20 20" fill="none" stroke-linecap="round" stroke-linejoin="round"><path d="M5.5 8 L10 12.5 L14.5 8" stroke="#A8ABB0" stroke-width="1.3"/></svg>
<svg style="position:absolute;left:262.0px;top:447.0px;overflow:visible;" width="32" height="32" viewBox="0 0 20 20" fill="none" stroke-linecap="round" stroke-linejoin="round"><path d="M2.5 5 a1 1 0 0 1 1 -1 H8 L10 6 H16.5 a1 1 0 0 1 1 1 V15 a1 1 0 0 1 -1 1 H3.5 a1 1 0 0 1 -1 -1 Z" stroke="#CED0D6" fill="#43454A" stroke-width="1.2"/><circle cx="7" cy="11" r="1.5" stroke="#CED0D6" stroke-width="1.1"/></svg>
<div style="position:absolute;left:300px;top:443.0px;height:40px;line-height:40px;font-family:'Liberation Sans', sans-serif;font-size:27.2px;color:#DFE1E5;font-weight:normal;white-space:pre;"><span style="color:#DFE1E5;font-weight:normal">ui.theme</span></div>
<svg style="position:absolute;left:300.0px;top:495.0px;overflow:visible;" width="32" height="32" viewBox="0 0 20 20" fill="none" stroke-linecap="round" stroke-linejoin="round"><path d="M3.5 3.5 H16.5 L10 10 L16.5 16.5 H3.5 Z" stroke="#A571E6" fill="#2F2A3A" stroke-width="1.2"/></svg>
<div style="position:absolute;left:338px;top:491.0px;height:40px;line-height:40px;font-family:'Liberation Sans', sans-serif;font-size:27.2px;color:#DFE1E5;font-weight:normal;white-space:pre;"><span style="color:#73BD79;font-weight:normal">Color.kt</span></div>
<svg style="position:absolute;left:300.0px;top:543.0px;overflow:visible;" width="32" height="32" viewBox="0 0 20 20" fill="none" stroke-linecap="round" stroke-linejoin="round"><path d="M3.5 3.5 H16.5 L10 10 L16.5 16.5 H3.5 Z" stroke="#A571E6" fill="#2F2A3A" stroke-width="1.2"/></svg>
<div style="position:absolute;left:338px;top:539.0px;height:40px;line-height:40px;font-family:'Liberation Sans', sans-serif;font-size:27.2px;color:#DFE1E5;font-weight:normal;white-space:pre;"><span style="color:#73BD79;font-weight:normal">Theme.kt</span></div>
<svg style="position:absolute;left:300.0px;top:591.0px;overflow:visible;" width="32" height="32" viewBox="0 0 20 20" fill="none" stroke-linecap="round" stroke-linejoin="round"><path d="M3.5 3.5 H16.5 L10 10 L16.5 16.5 H3.5 Z" stroke="#A571E6" fill="#2F2A3A" stroke-width="1.2"/></svg>
<div style="position:absolute;left:338px;top:587.0px;height:40px;line-height:40px;font-family:'Liberation Sans', sans-serif;font-size:27.2px;color:#DFE1E5;font-weight:normal;white-space:pre;"><span style="color:#73BD79;font-weight:normal">Type.kt</span></div>
<svg style="position:absolute;left:262.0px;top:639.0px;overflow:visible;" width="32" height="32" viewBox="0 0 20 20" fill="none" stroke-linecap="round" stroke-linejoin="round"><path d="M3.5 3.5 H16.5 L10 10 L16.5 16.5 H3.5 Z" stroke="#A571E6" fill="#2F2A3A" stroke-width="1.2"/></svg>
<div id="mc2cb4756" style="position:absolute;left:300px;top:635.0px;height:40px;line-height:40px;font-family:'Liberation Sans', sans-serif;font-size:28.67px;color:#DFE1E5;font-weight:normal;white-space:pre;"><span style="color:#73BD79;font-weight:normal">MainActivity.kt</span></div>
<svg style="position:absolute;left:182.6px;top:688.0px;overflow:visible;" width="30" height="30" viewBox="0 0 20 20" fill="none" stroke-linecap="round" stroke-linejoin="round"><path d="M8 5.5 L12.5 10 L8 14.5" stroke="#A8ABB0" stroke-width="1.3"/></svg>
<svg style="position:absolute;left:224.0px;top:687.0px;overflow:visible;" width="32" height="32" viewBox="0 0 20 20" fill="none" stroke-linecap="round" stroke-linejoin="round"><path d="M2.5 5 a1 1 0 0 1 1 -1 H8 L10 6 H16.5 a1 1 0 0 1 1 1 V15 a1 1 0 0 1 -1 1 H3.5 a1 1 0 0 1 -1 -1 Z" stroke="#CED0D6" fill="#43454A" stroke-width="1.2"/><circle cx="7" cy="11" r="1.5" stroke="#CED0D6" stroke-width="1.1"/></svg>
<div style="position:absolute;left:262px;top:683.0px;height:40px;line-height:40px;font-family:'Liberation Sans', sans-serif;font-size:27.2px;color:#DFE1E5;font-weight:normal;white-space:pre;"><span style="color:#DFE1E5;font-weight:normal">com.example.cobaaplikasi1</span><span style="color:#868A91;font-weight:normal"> (androidTest)</span></div>
<svg style="position:absolute;left:182.6px;top:736.0px;overflow:visible;" width="30" height="30" viewBox="0 0 20 20" fill="none" stroke-linecap="round" stroke-linejoin="round"><path d="M8 5.5 L12.5 10 L8 14.5" stroke="#A8ABB0" stroke-width="1.3"/></svg>
<svg style="position:absolute;left:224.0px;top:735.0px;overflow:visible;" width="32" height="32" viewBox="0 0 20 20" fill="none" stroke-linecap="round" stroke-linejoin="round"><path d="M2.5 5 a1 1 0 0 1 1 -1 H8 L10 6 H16.5 a1 1 0 0 1 1 1 V15 a1 1 0 0 1 -1 1 H3.5 a1 1 0 0 1 -1 -1 Z" stroke="#CED0D6" fill="#43454A" stroke-width="1.2"/><circle cx="7" cy="11" r="1.5" stroke="#CED0D6" stroke-width="1.1"/></svg>
<div style="position:absolute;left:262px;top:731.0px;height:40px;line-height:40px;font-family:'Liberation Sans', sans-serif;font-size:27.2px;color:#DFE1E5;font-weight:normal;white-space:pre;"><span style="color:#DFE1E5;font-weight:normal">com.example.cobaaplikasi1</span><span style="color:#868A91;font-weight:normal"> (test)</span></div>
<svg style="position:absolute;left:144.6px;top:784.0px;overflow:visible;" width="30" height="30" viewBox="0 0 20 20" fill="none" stroke-linecap="round" stroke-linejoin="round"><path d="M8 5.5 L12.5 10 L8 14.5" stroke="#A8ABB0" stroke-width="1.3"/></svg>
<svg style="position:absolute;left:186.0px;top:783.0px;overflow:visible;" width="32" height="32" viewBox="0 0 20 20" fill="none" stroke-linecap="round" stroke-linejoin="round"><path d="M9 16 H3.5 a1 1 0 0 1 -1 -1 V5 a1 1 0 0 1 1 -1 H8 L10 6 H16.5 a1 1 0 0 1 1 1 V10.5" stroke="#CED0D6" fill="#43454A" stroke-width="1.2"/><path d="M11 12 H17.5 M11 14.5 H17.5 M11 17 H17.5" stroke="#F2C55C" stroke-width="1.2"/></svg>
<div style="position:absolute;left:224px;top:779.0px;height:40px;line-height:40px;font-family:'Liberation Sans', sans-serif;font-size:27.2px;color:#DFE1E5;font-weight:normal;white-space:pre;"><span style="color:#DFE1E5;font-weight:normal">res</span></div>
<svg style="position:absolute;left:186.0px;top:831.0px;overflow:visible;" width="32" height="32" viewBox="0 0 20 20" fill="none" stroke-linecap="round" stroke-linejoin="round"><path d="M9 16 H3.5 a1 1 0 0 1 -1 -1 V5 a1 1 0 0 1 1 -1 H8 L10 6 H16.5 a1 1 0 0 1 1 1 V10.5" stroke="#CED0D6" fill="#43454A" stroke-width="1.2"/><path d="M11 12 H17.5 M11 14.5 H17.5 M11 17 H17.5" stroke="#F2C55C" stroke-width="1.2"/></svg>
<div style="position:absolute;left:224px;top:827.0px;height:40px;line-height:40px;font-family:'Liberation Sans', sans-serif;font-size:27.2px;color:#DFE1E5;font-weight:normal;white-space:pre;"><span style="color:#DFE1E5;font-weight:normal">res</span><span style="color:#868A91;font-weight:normal"> (generated)</span></div>
<svg style="position:absolute;left:106.6px;top:880.0px;overflow:visible;" width="30" height="30" viewBox="0 0 20 20" fill="none" stroke-linecap="round" stroke-linejoin="round"><path d="M8 5.5 L12.5 10 L8 14.5" stroke="#A8ABB0" stroke-width="1.3"/></svg>
<svg style="position:absolute;left:148.0px;top:879.0px;overflow:visible;" width="32" height="32" viewBox="0 0 20 20" fill="none" stroke-linecap="round" stroke-linejoin="round"><path d="M0.8 16.7 C0.8 12 2.5 9 4.2 7.2 C6 5.5 9 5 12 6 C14 6.6 15.5 7.6 16.8 7.6 C18.3 7.6 18.8 6.5 18.8 5.3 C18.8 3.9 17.8 3.2 16.9 3.2 C16 3.2 15.4 3.7 15 4.1" stroke="#CED0D6" stroke-width="1.4"/><path d="M18.9 5.5 C19.3 8.5 17.5 10.5 15.8 12 C14.5 13.2 13.9 14.5 13.9 16.7 H12.4 C11.8 15.3 11 14.8 10.1 14.8 C9.2 14.8 8.4 15.3 7.9 16.7 H6.8 C6.2 15.3 5.4 14.8 4.5 14.8 C3.6 14.8 2.9 15.3 2.4 16.7 H0.8" stroke="#CED0D6" stroke-width="1.4"/><path d="M4.2 7.2 C4.5 9 4.8 11 6.2 11.1 C7.3 11.2 8.3 10.4 9.3 9.8" stroke="#CED0D6" stroke-width="1.4"/><circle cx="12.4" cy="9.5" r="0.7" fill="#CED0D6"/></svg>
<div id="m16bb847c" style="position:absolute;left:186px;top:875.0px;height:40px;line-height:40px;font-family:'Liberation Sans', sans-serif;font-size:27.36px;color:#DFE1E5;font-weight:normal;white-space:pre;"><span style="color:#DFE1E5;font-weight:normal">Gradle Scripts</span></div>
<svg style="position:absolute;left:1030.0px;top:180.0px;overflow:visible;" width="32" height="32" viewBox="0 0 20 20" fill="none" stroke-linecap="round" stroke-linejoin="round"><path d="M3.5 3.5 H16.5 L10 10 L16.5 16.5 H3.5 Z" stroke="#A571E6" fill="#2F2A3A" stroke-width="1.2"/></svg>
<div id="m74b6e18f" style="position:absolute;left:1072px;top:176.0px;height:40px;line-height:40px;font-family:'Liberation Sans', sans-serif;font-size:28.66px;color:#73BD79;font-weight:normal;white-space:pre;">MainActivity.kt</div>
<svg style="position:absolute;left:1272.0px;top:182.0px;overflow:visible;" width="28" height="28" viewBox="0 0 20 20" fill="none" stroke-linecap="round" stroke-linejoin="round"><path d="M6 6 L14 14 M14 6 L6 14" stroke="#8C8F94" stroke-width="1.2"/></svg>
<svg style="position:absolute;left:1339.0px;top:179.0px;overflow:visible;" width="34" height="34" viewBox="0 0 20 20" fill="none" stroke-linecap="round" stroke-linejoin="round"><path d="M0.8 16.7 C0.8 12 2.5 9 4.2 7.2 C6 5.5 9 5 12 6 C14 6.6 15.5 7.6 16.8 7.6 C18.3 7.6 18.8 6.5 18.8 5.3 C18.8 3.9 17.8 3.2 16.9 3.2 C16 3.2 15.4 3.7 15 4.1" stroke="#CED0D6" stroke-width="1.2"/><path d="M18.9 5.5 C19.3 8.5 17.5 10.5 15.8 12 C14.5 13.2 13.9 14.5 13.9 16.7 H12.4 C11.8 15.3 11 14.8 10.1 14.8 C9.2 14.8 8.4 15.3 7.9 16.7 H6.8 C6.2 15.3 5.4 14.8 4.5 14.8 C3.6 14.8 2.9 15.3 2.4 16.7 H0.8" stroke="#CED0D6" stroke-width="1.2"/><path d="M4.2 7.2 C4.5 9 4.8 11 6.2 11.1 C7.3 11.2 8.3 10.4 9.3 9.8" stroke="#CED0D6" stroke-width="1.2"/><circle cx="12.4" cy="9.5" r="0.7" fill="#CED0D6"/><path d="M11 11 H17.5 L14.2 14.3 L17.5 17.5 H11 Z" stroke="#A571E6" fill="#2F2A3A" stroke-width="1.1"/></svg>
<div id="mb311f16b" style="position:absolute;left:1383px;top:176.0px;height:40px;line-height:40px;font-family:'Liberation Sans', sans-serif;font-size:27.32px;color:#C97B70;font-weight:normal;white-space:pre;">build.gradle.kts (CobaAplikasi1)</div>
<svg style="position:absolute;left:1807.0px;top:179.0px;overflow:visible;" width="34" height="34" viewBox="0 0 20 20" fill="none" stroke-linecap="round" stroke-linejoin="round"><path d="M5.5 8 L10 12.5 L14.5 8" stroke="#CED0D6" stroke-width="1.3"/></svg>
<div style="position:absolute;left:1856px;top:176px;width:2px;height:41px;background:#393B40;border-radius:0px;"></div>
<div style="position:absolute;left:1868px;top:175px;width:48px;height:43px;background:#393B40;border-radius:8px;"></div>
<svg style="position:absolute;left:1875.0px;top:179.0px;overflow:visible;" width="34" height="34" viewBox="0 0 20 20" fill="none" stroke-linecap="round" stroke-linejoin="round"><path d="M4 4 H16 M4 7.5 H16 M4 11 H16 M4 14.5 H16" stroke="#DFE1E5" stroke-width="1.2"/></svg>
<svg style="position:absolute;left:1930.0px;top:179.0px;overflow:visible;" width="34" height="34" viewBox="0 0 20 20" fill="none" stroke-linecap="round" stroke-linejoin="round"><path d="M3.5 4 H7 M3.5 7.5 H7 M3.5 11 H7 M3.5 14.5 H7" stroke="#CED0D6" stroke-width="1.2"/><rect x="10" y="3.5" width="6.5" height="12" rx="1.5" stroke="#CED0D6" stroke-width="1.2"/></svg>
<svg style="position:absolute;left:1986.0px;top:179.0px;overflow:visible;" width="34" height="34" viewBox="0 0 20 20" fill="none" stroke-linecap="round" stroke-linejoin="round"><rect x="3.5" y="3.5" width="13" height="13" rx="1" stroke="#CED0D6" stroke-width="1.2"/><circle cx="12.5" cy="7.5" r="1.5" stroke="#CED0D6" stroke-width="1.1"/><path d="M3.5 13.5 L8 9 L13 14" stroke="#CED0D6" stroke-width="1.2"/></svg>
<div style="position:absolute;left:2038px;top:176px;width:2px;height:41px;background:#393B40;border-radius:0px;"></div>
<svg style="position:absolute;left:2054.0px;top:178.0px;overflow:visible;" width="36" height="36" viewBox="0 0 20 20" fill="none" stroke-linecap="round" stroke-linejoin="round"><circle cx="10" cy="4.5" r="1.2" fill="#CED0D6"/><circle cx="10" cy="10" r="1.2" fill="#CED0D6"/><circle cx="10" cy="15.5" r="1.2" fill="#CED0D6"/></svg>
<div style="position:absolute;left:1004px;top:236px;width:1108px;height:2px;background:#393B40;border-radius:0px;"></div>
<div style="position:absolute;left:1006px;top:231px;width:311px;height:7px;background:#4E5157;border-radius:4px;"></div>
<div style="position:absolute;left:1004px;top:637px;width:1108px;height:44px;background:#26282E;border-radius:0px;"></div>
<div style="position:absolute;left:1170px;top:238px;width:2px;height:1498px;background:#2D2F33;border-radius:0px;"></div>
<div style="position:absolute;left:1234px;top:549px;width:2px;height:528px;background:#313438;border-radius:0px;"></div>
<div style="position:absolute;left:1297px;top:681px;width:2px;height:352px;background:#4E5157;border-radius:0px;"></div>
<div style="position:absolute;left:1359px;top:725px;width:2px;height:264px;background:#313438;border-radius:0px;"></div>
<div style="position:absolute;left:1422px;top:769px;width:2px;height:176px;background:#313438;border-radius:0px;"></div>
<div style="position:absolute;left:1484px;top:813px;width:2px;height:88px;background:#313438;border-radius:0px;"></div>
<div style="position:absolute;left:1234px;top:1385px;width:2px;height:88px;background:#313438;border-radius:0px;"></div>
<div style="position:absolute;left:951px;top:242.5px;height:44px;line-height:44px;font-family:'Liberation Mono', monospace;font-size:26px;color:#4B5059;font-weight:normal;white-space:pre;width:100px;text-align:right">1</div>
<div style="position:absolute;left:1176.5px;top:243.0px;height:44px;line-height:44px;font-family:'Liberation Mono', monospace;font-size:26px;color:#BCBEC4;font-weight:normal;white-space:pre;"><span style="color:#CF8E6D">package</span><span style="color:#BCBEC4"> com.example.cobaaplikasi1</span></div>
<div style="position:absolute;left:951px;top:286.5px;height:44px;line-height:44px;font-family:'Liberation Mono', monospace;font-size:26px;color:#4B5059;font-weight:normal;white-space:pre;width:100px;text-align:right">2</div>
<div style="position:absolute;left:951px;top:330.5px;height:44px;line-height:44px;font-family:'Liberation Mono', monospace;font-size:26px;color:#4B5059;font-weight:normal;white-space:pre;width:100px;text-align:right">3</div>
<div style="position:absolute;left:1176.5px;top:331.0px;height:44px;line-height:44px;font-family:'Liberation Mono', monospace;font-size:26px;color:#BCBEC4;font-weight:normal;white-space:pre;"><span style="color:#CF8E6D">import</span><span style="color:#BCBEC4"> </span></div>
<div style="position:absolute;left:951px;top:374.5px;height:44px;line-height:44px;font-family:'Liberation Mono', monospace;font-size:26px;color:#4B5059;font-weight:normal;white-space:pre;width:100px;text-align:right">15</div>
<div id="m9d09b99d" style="position:absolute;left:1176.5px;top:417.0px;height:44px;line-height:44px;font-family:'Liberation Sans', sans-serif;font-size:24.0px;color:#868A91;font-weight:normal;white-space:pre;">1 Usage</div>
<div style="position:absolute;left:951px;top:462.5px;height:44px;line-height:44px;font-family:'Liberation Mono', monospace;font-size:26px;color:#4B5059;font-weight:normal;white-space:pre;width:100px;text-align:right">16</div>
<div style="position:absolute;left:1176.5px;top:463.0px;height:44px;line-height:44px;font-family:'Liberation Mono', monospace;font-size:26px;color:#BCBEC4;font-weight:normal;white-space:pre;"><span style="color:#CF8E6D">class</span><span style="color:#BCBEC4"> MainActivity : ComponentActivity() {</span></div>
<div style="position:absolute;left:951px;top:506.5px;height:44px;line-height:44px;font-family:'Liberation Mono', monospace;font-size:26px;color:#4B5059;font-weight:normal;white-space:pre;width:100px;text-align:right">17</div>
<div style="position:absolute;left:1176.5px;top:507.0px;height:44px;line-height:44px;font-family:'Liberation Mono', monospace;font-size:26px;color:#BCBEC4;font-weight:normal;white-space:pre;"><span style="color:#CF8E6D">    override fun </span><span style="color:#56A8F5">onCreate</span><span style="color:#BCBEC4">(savedInstanceState: Bundle?) {</span></div>
<div style="position:absolute;left:951px;top:550.5px;height:44px;line-height:44px;font-family:'Liberation Mono', monospace;font-size:26px;color:#4B5059;font-weight:normal;white-space:pre;width:100px;text-align:right">18</div>
<div style="position:absolute;left:1176.5px;top:551.0px;height:44px;line-height:44px;font-family:'Liberation Mono', monospace;font-size:26px;color:#BCBEC4;font-weight:normal;white-space:pre;"><span style="color:#CF8E6D">        super</span><span style="color:#BCBEC4">.onCreate(savedInstanceState)</span></div>
<div style="position:absolute;left:951px;top:594.5px;height:44px;line-height:44px;font-family:'Liberation Mono', monospace;font-size:26px;color:#4B5059;font-weight:normal;white-space:pre;width:100px;text-align:right">19</div>
<div style="position:absolute;left:1176.5px;top:595.0px;height:44px;line-height:44px;font-family:'Liberation Mono', monospace;font-size:26px;color:#BCBEC4;font-weight:normal;white-space:pre;"><span style="color:#56A8F5;font-style:italic">        enableEdgeToEdge</span><span style="color:#BCBEC4">()</span></div>
<div style="position:absolute;left:951px;top:638.5px;height:44px;line-height:44px;font-family:'Liberation Mono', monospace;font-size:26px;color:#A1A3AB;font-weight:normal;white-space:pre;width:100px;text-align:right">20</div>
<div style="position:absolute;left:1176.5px;top:639.0px;height:44px;line-height:44px;font-family:'Liberation Mono', monospace;font-size:26px;color:#BCBEC4;font-weight:normal;white-space:pre;"><span style="color:#56A8F5;font-style:italic">        setContent</span><span style="color:#BCBEC4"> </span></div>
<div style="position:absolute;left:951px;top:682.5px;height:44px;line-height:44px;font-family:'Liberation Mono', monospace;font-size:26px;color:#4B5059;font-weight:normal;white-space:pre;width:100px;text-align:right">21</div>
<div style="position:absolute;left:1176.5px;top:683.0px;height:44px;line-height:44px;font-family:'Liberation Mono', monospace;font-size:26px;color:#BCBEC4;font-weight:normal;white-space:pre;"><span style="color:#73BB8B">            CobaAplikasi1Theme</span><span style="color:#BCBEC4"> {</span></div>
<div style="position:absolute;left:951px;top:726.5px;height:44px;line-height:44px;font-family:'Liberation Mono', monospace;font-size:26px;color:#4B5059;font-weight:normal;white-space:pre;width:100px;text-align:right">22</div>
<div style="position:absolute;left:1176.5px;top:727.0px;height:44px;line-height:44px;font-family:'Liberation Mono', monospace;font-size:26px;color:#BCBEC4;font-weight:normal;white-space:pre;"><span style="color:#73BB8B">                Scaffold</span><span style="color:#BCBEC4">(</span><span style="color:#56C1D6">modifier =</span><span style="color:#BCBEC4"> Modifier.</span><span style="color:#56A8F5;font-style:italic">fillMaxSize</span><span style="color:#BCBEC4">())</span></div>
<div style="position:absolute;left:951px;top:770.5px;height:44px;line-height:44px;font-family:'Liberation Mono', monospace;font-size:26px;color:#4B5059;font-weight:normal;white-space:pre;width:100px;text-align:right">23</div>
<div style="position:absolute;left:1176.5px;top:771.0px;height:44px;line-height:44px;font-family:'Liberation Mono', monospace;font-size:26px;color:#BCBEC4;font-weight:normal;white-space:pre;"><span style="color:#73BB8B">                    Greeting</span><span style="color:#BCBEC4">(</span></div>
<div style="position:absolute;left:951px;top:814.5px;height:44px;line-height:44px;font-family:'Liberation Mono', monospace;font-size:26px;color:#4B5059;font-weight:normal;white-space:pre;width:100px;text-align:right">24</div>
<div style="position:absolute;left:1176.5px;top:815.0px;height:44px;line-height:44px;font-family:'Liberation Mono', monospace;font-size:26px;color:#BCBEC4;font-weight:normal;white-space:pre;"><span style="color:#56C1D6">                        name =</span><span style="color:#BCBEC4"> </span><span style="color:#6AAB73">"Android"</span><span style="color:#BCBEC4">,</span></div>
<div style="position:absolute;left:951px;top:858.5px;height:44px;line-height:44px;font-family:'Liberation Mono', monospace;font-size:26px;color:#4B5059;font-weight:normal;white-space:pre;width:100px;text-align:right">25</div>
<div style="position:absolute;left:1176.5px;top:859.0px;height:44px;line-height:44px;font-family:'Liberation Mono', monospace;font-size:26px;color:#BCBEC4;font-weight:normal;white-space:pre;"><span style="color:#56C1D6">                        modifier =</span><span style="color:#BCBEC4"> Modifier.</span><span style="color:#56A8F5;font-style:italic">padding</span><span style="color:#BCBEC4">(</span></div>
<div style="position:absolute;left:951px;top:902.5px;height:44px;line-height:44px;font-family:'Liberation Mono', monospace;font-size:26px;color:#4B5059;font-weight:normal;white-space:pre;width:100px;text-align:right">26</div>
<div style="position:absolute;left:1176.5px;top:903.0px;height:44px;line-height:44px;font-family:'Liberation Mono', monospace;font-size:26px;color:#BCBEC4;font-weight:normal;white-space:pre;"><span style="color:#BCBEC4">                    )</span></div>
<div style="position:absolute;left:951px;top:946.5px;height:44px;line-height:44px;font-family:'Liberation Mono', monospace;font-size:26px;color:#4B5059;font-weight:normal;white-space:pre;width:100px;text-align:right">27</div>
<div style="position:absolute;left:1176.5px;top:947.0px;height:44px;line-height:44px;font-family:'Liberation Mono', monospace;font-size:26px;color:#BCBEC4;font-weight:normal;white-space:pre;"><span style="color:#BCBEC4">                }</span></div>
<div style="position:absolute;left:951px;top:990.5px;height:44px;line-height:44px;font-family:'Liberation Mono', monospace;font-size:26px;color:#4B5059;font-weight:normal;white-space:pre;width:100px;text-align:right">28</div>
<div style="position:absolute;left:1176.5px;top:991.0px;height:44px;line-height:44px;font-family:'Liberation Mono', monospace;font-size:26px;color:#BCBEC4;font-weight:normal;white-space:pre;"><span style="color:#BCBEC4">            }</span></div>
<div style="position:absolute;left:951px;top:1034.5px;height:44px;line-height:44px;font-family:'Liberation Mono', monospace;font-size:26px;color:#4B5059;font-weight:normal;white-space:pre;width:100px;text-align:right">29</div>
<div style="position:absolute;left:1176.5px;top:1035.0px;height:44px;line-height:44px;font-family:'Liberation Mono', monospace;font-size:26px;color:#BCBEC4;font-weight:normal;white-space:pre;"><span style="color:#BCBEC4">        </span></div>
<div style="position:absolute;left:951px;top:1078.5px;height:44px;line-height:44px;font-family:'Liberation Mono', monospace;font-size:26px;color:#4B5059;font-weight:normal;white-space:pre;width:100px;text-align:right">30</div>
<div style="position:absolute;left:1176.5px;top:1079.0px;height:44px;line-height:44px;font-family:'Liberation Mono', monospace;font-size:26px;color:#BCBEC4;font-weight:normal;white-space:pre;"><span style="color:#BCBEC4">    }</span></div>
<div style="position:absolute;left:951px;top:1122.5px;height:44px;line-height:44px;font-family:'Liberation Mono', monospace;font-size:26px;color:#4B5059;font-weight:normal;white-space:pre;width:100px;text-align:right">31</div>
<div style="position:absolute;left:1176.5px;top:1123.0px;height:44px;line-height:44px;font-family:'Liberation Mono', monospace;font-size:26px;color:#BCBEC4;font-weight:normal;white-space:pre;"><span style="color:#BCBEC4">}</span></div>
<div style="position:absolute;left:951px;top:1166.5px;height:44px;line-height:44px;font-family:'Liberation Mono', monospace;font-size:26px;color:#4B5059;font-weight:normal;white-space:pre;width:100px;text-align:right">32</div>
<div id="medd82a1a" style="position:absolute;left:1176.5px;top:1209.0px;height:44px;line-height:44px;font-family:'Liberation Sans', sans-serif;font-size:24.86px;color:#868A91;font-weight:normal;white-space:pre;">2 Usages</div>
<div style="position:absolute;left:951px;top:1254.5px;height:44px;line-height:44px;font-family:'Liberation Mono', monospace;font-size:26px;color:#4B5059;font-weight:normal;white-space:pre;width:100px;text-align:right">33</div>
<div style="position:absolute;left:1176.5px;top:1255.0px;height:44px;line-height:44px;font-family:'Liberation Mono', monospace;font-size:26px;color:#BCBEC4;font-weight:normal;white-space:pre;"><span style="color:#B3AE60">@Composable</span></div>
<div style="position:absolute;left:951px;top:1298.5px;height:44px;line-height:44px;font-family:'Liberation Mono', monospace;font-size:26px;color:#4B5059;font-weight:normal;white-space:pre;width:100px;text-align:right">34</div>
<div style="position:absolute;left:1176.5px;top:1299.0px;height:44px;line-height:44px;font-family:'Liberation Mono', monospace;font-size:26px;color:#BCBEC4;font-weight:normal;white-space:pre;"><span style="color:#CF8E6D">fun </span><span style="color:#56A8F5">Greeting</span><span style="color:#BCBEC4">(name: String, modifier: Modifier = Modifier) {</span></div>
<div style="position:absolute;left:951px;top:1342.5px;height:44px;line-height:44px;font-family:'Liberation Mono', monospace;font-size:26px;color:#4B5059;font-weight:normal;white-space:pre;width:100px;text-align:right">35</div>
<div style="position:absolute;left:1176.5px;top:1343.0px;height:44px;line-height:44px;font-family:'Liberation Mono', monospace;font-size:26px;color:#BCBEC4;font-weight:normal;white-space:pre;"><span style="color:#73BB8B">    Text</span><span style="color:#BCBEC4">(</span></div>
<div style="position:absolute;left:951px;top:1386.5px;height:44px;line-height:44px;font-family:'Liberation Mono', monospace;font-size:26px;color:#4B5059;font-weight:normal;white-space:pre;width:100px;text-align:right">36</div>
<div style="position:absolute;left:1176.5px;top:1387.0px;height:44px;line-height:44px;font-family:'Liberation Mono', monospace;font-size:26px;color:#BCBEC4;font-weight:normal;white-space:pre;"><span style="color:#56C1D6">        text =</span><span style="color:#BCBEC4"> </span><span style="color:#6AAB73">"Hello </span><span style="color:#CF8E6D">$</span><span style="color:#BCBEC4">name</span><span style="color:#6AAB73">!"</span><span style="color:#BCBEC4">,</span></div>
<div style="position:absolute;left:951px;top:1430.5px;height:44px;line-height:44px;font-family:'Liberation Mono', monospace;font-size:26px;color:#4B5059;font-weight:normal;white-space:pre;width:100px;text-align:right">37</div>
<div style="position:absolute;left:1176.5px;top:1431.0px;height:44px;line-height:44px;font-family:'Liberation Mono', monospace;font-size:26px;color:#BCBEC4;font-weight:normal;white-space:pre;"><span style="color:#56C1D6">        modifier =</span><span style="color:#BCBEC4"> modifier</span></div>
<div style="position:absolute;left:951px;top:1474.5px;height:44px;line-height:44px;font-family:'Liberation Mono', monospace;font-size:26px;color:#4B5059;font-weight:normal;white-space:pre;width:100px;text-align:right">38</div>
<div style="position:absolute;left:1176.5px;top:1475.0px;height:44px;line-height:44px;font-family:'Liberation Mono', monospace;font-size:26px;color:#BCBEC4;font-weight:normal;white-space:pre;"><span style="color:#BCBEC4">    )</span></div>
<div style="position:absolute;left:951px;top:1518.5px;height:44px;line-height:44px;font-family:'Liberation Mono', monospace;font-size:26px;color:#4B5059;font-weight:normal;white-space:pre;width:100px;text-align:right">39</div>
<div style="position:absolute;left:1176.5px;top:1519.0px;height:44px;line-height:44px;font-family:'Liberation Mono', monospace;font-size:26px;color:#BCBEC4;font-weight:normal;white-space:pre;"><span style="color:#BCBEC4">}</span></div>
<div style="position:absolute;left:951px;top:1562.5px;height:44px;line-height:44px;font-family:'Liberation Mono', monospace;font-size:26px;color:#4B5059;font-weight:normal;white-space:pre;width:100px;text-align:right">40</div>
<div style="position:absolute;left:951px;top:1606.5px;height:44px;line-height:44px;font-family:'Liberation Mono', monospace;font-size:26px;color:#4B5059;font-weight:normal;white-space:pre;width:100px;text-align:right">41</div>
<div style="position:absolute;left:1176.5px;top:1607.0px;height:44px;line-height:44px;font-family:'Liberation Mono', monospace;font-size:26px;color:#BCBEC4;font-weight:normal;white-space:pre;"><span style="color:#B3AE60">@Preview</span><span style="color:#BCBEC4">(showBackground = </span><span style="color:#CF8E6D">true</span><span style="color:#BCBEC4">)</span></div>
<div style="position:absolute;left:951px;top:1650.5px;height:44px;line-height:44px;font-family:'Liberation Mono', monospace;font-size:26px;color:#4B5059;font-weight:normal;white-space:pre;width:100px;text-align:right">42</div>
<div style="position:absolute;left:1176.5px;top:1651.0px;height:44px;line-height:44px;font-family:'Liberation Mono', monospace;font-size:26px;color:#BCBEC4;font-weight:normal;white-space:pre;"><span style="color:#B3AE60">@Composable</span></div>
<div style="position:absolute;left:951px;top:1694.5px;height:44px;line-height:44px;font-family:'Liberation Mono', monospace;font-size:26px;color:#4B5059;font-weight:normal;white-space:pre;width:100px;text-align:right">43</div>
<div style="position:absolute;left:1176.5px;top:1695.0px;height:44px;line-height:44px;font-family:'Liberation Mono', monospace;font-size:26px;color:#BCBEC4;font-weight:normal;white-space:pre;"><span style="color:#CF8E6D">fun </span><span style="color:#56A8F5">GreetingPreview</span><span style="color:#BCBEC4">() {</span></div>
<div style="position:absolute;left:1285px;top:328px;width:47px;height:43px;background:#393B40;border-radius:3px;"></div>
<div style="position:absolute;left:1285px;top:329.0px;height:44px;line-height:44px;font-family:'Liberation Mono', monospace;font-size:26px;color:#8C8F94;font-weight:normal;white-space:pre;">...</div>
<svg style="position:absolute;left:1132.0px;top:338.0px;overflow:visible;" width="26" height="26" viewBox="0 0 20 20" fill="none" stroke-linecap="round" stroke-linejoin="round"><path d="M8 5.5 L12.5 10 L8 14.5" stroke="#8C8F94" stroke-width="1.2"/></svg>
<div style="position:absolute;left:1473px;top:637px;width:16px;height:44px;background:#43454A;border-radius:0px;"></div>
<div style="position:absolute;left:1473px;top:637.0px;height:44px;line-height:44px;font-family:'Liberation Mono', monospace;font-size:26px;color:#BCBEC4;font-weight:normal;white-space:pre;">{</div>
<div style="position:absolute;left:1301px;top:1033px;width:16px;height:44px;background:#43454A;border-radius:0px;"></div>
<div style="position:absolute;left:1301px;top:1033.0px;height:44px;line-height:44px;font-family:'Liberation Mono', monospace;font-size:26px;color:#BCBEC4;font-weight:normal;white-space:pre;">}</div>
<div style="position:absolute;left:1986px;top:858px;width:124px;height:40px;background:#2E3033;border-radius:0px;border-radius:6px 0 0 6px"></div>
<div style="position:absolute;left:2001px;top:858.0px;height:40px;line-height:40px;font-family:'Liberation Sans', sans-serif;font-size:25px;color:#8C8F94;font-weight:normal;white-space:pre;width:109px;overflow:hidden">padding\</div>
<svg style="position:absolute;left:1059.0px;top:465.0px;overflow:visible;" width="34" height="34" viewBox="0 0 20 20" fill="none" stroke-linecap="round" stroke-linejoin="round"><path d="M4.3 3.6 a0.7 0.7 0 0 1 1 -0.6 L16.3 9.4 a0.7 0.7 0 0 1 0 1.2 L5.3 17 a0.7 0.7 0 0 1 -1 -0.6 Z" stroke="#62A368" fill="#253627" stroke-width="1.3"/></svg>
<svg style="position:absolute;left:1095.0px;top:467.0px;overflow:visible;" width="32" height="32" viewBox="0 0 20 20" fill="none" stroke-linecap="round" stroke-linejoin="round"><path d="M6 5 L2 10 L6 15 M14 5 L18 10 L14 15 M11.5 3.5 L8.5 16.5" stroke="#CF8E6D" stroke-width="1.3"/></svg>
<svg style="position:absolute;left:1095.0px;top:511.0px;overflow:visible;" width="32" height="32" viewBox="0 0 20 20" fill="none" stroke-linecap="round" stroke-linejoin="round"><path d="M14.4 4.8 A6.25 6.25 0 1 0 15.8 11.5" stroke="#548AF7" fill="#25324D" stroke-width="1.3"/><circle cx="9.9" cy="9.9" r="3.1" stroke="#548AF7" stroke-width="1.3"/><path d="M17.4 10.3 V1.2 M14.5 4 L17.4 1.1 L20.3 4" stroke="#E06C75" stroke-width="1.3"/></svg>
<svg style="position:absolute;left:1063.0px;top:1612.0px;overflow:visible;" width="26" height="26" viewBox="0 0 20 20" fill="none" stroke-linecap="round" stroke-linejoin="round"><path d="M10.00 1.30 L10.38 1.31 L10.76 1.33 L11.13 1.43 L11.44 1.85 L11.70 2.33 L11.92 2.85 L12.09 3.38 L12.23 3.87 L12.36 4.31 L12.58 4.47 L12.82 4.59 L13.05 4.72 L13.28 4.86 L13.50 5.00 L13.75 5.11 L14.19 5.00 L14.69 4.88 L15.23 4.77 L15.79 4.69 L16.34 4.68 L16.86 4.74 L17.13 5.01 L17.34 5.33 L17.53 5.65 L17.72 5.98 L17.88 6.32 L17.98 6.69 L17.78 7.17 L17.49 7.64 L17.15 8.08 L16.78 8.50 L16.42 8.87 L16.11 9.20 L16.08 9.47 L16.09 9.73 L16.10 10.00 L16.09 10.27 L16.08 10.53 L16.11 10.80 L16.42 11.13 L16.78 11.50 L17.15 11.92 L17.49 12.36 L17.78 12.83 L17.98 13.31 L17.88 13.68 L17.72 14.02 L17.53 14.35 L17.34 14.67 L17.13 14.99 L16.86 15.26 L16.34 15.32 L15.79 15.31 L15.23 15.23 L14.69 15.12 L14.19 15.00 L13.75 14.89 L13.50 15.00 L13.28 15.14 L13.05 15.28 L12.82 15.41 L12.58 15.53 L12.36 15.69 L12.23 16.13 L12.09 16.62 L11.92 17.15 L11.70 17.67 L11.44 18.15 L11.13 18.57 L10.76 18.67 L10.38 18.69 L10.00 18.70 L9.62 18.69 L9.24 18.67 L8.87 18.57 L8.56 18.15 L8.30 17.67 L8.08 17.15 L7.91 16.62 L7.77 16.13 L7.64 15.69 L7.42 15.53 L7.18 15.41 L6.95 15.28 L6.72 15.14 L6.50 15.00 L6.25 14.89 L5.81 15.00 L5.31 15.12 L4.77 15.23 L4.21 15.31 L3.66 15.32 L3.14 15.26 L2.87 14.99 L2.66 14.67 L2.47 14.35 L2.28 14.02 L2.12 13.68 L2.02 13.31 L2.22 12.83 L2.51 12.36 L2.85 11.92 L3.22 11.50 L3.58 11.13 L3.89 10.80 L3.92 10.53 L3.91 10.27 L3.90 10.00 L3.91 9.73 L3.92 9.47 L3.89 9.20 L3.58 8.87 L3.22 8.50 L2.85 8.08 L2.51 7.64 L2.22 7.17 L2.02 6.69 L2.12 6.32 L2.28 5.98 L2.47 5.65 L2.66 5.33 L2.87 5.01 L3.14 4.74 L3.66 4.68 L4.21 4.69 L4.77 4.77 L5.31 4.88 L5.81 5.00 L6.25 5.11 L6.50 5.00 L6.72 4.86 L6.95 4.72 L7.18 4.59 L7.42 4.47 L7.64 4.31 L7.77 3.87 L7.91 3.38 L8.08 2.85 L8.30 2.33 L8.56 1.85 L8.87 1.43 L9.24 1.33 L9.62 1.31Z" stroke="#CED0D6" stroke-width="1.5" stroke-linejoin="round"/><circle cx="10" cy="10" r="2.6" stroke="#CED0D6" stroke-width="1.5"/></svg>
<svg style="position:absolute;left:1078.0px;top:1699.0px;overflow:visible;" width="32" height="32" viewBox="0 0 20 20" fill="none" stroke-linecap="round" stroke-linejoin="round"><path d="M8 16.5 H4.5 a1 1 0 0 1 -1 -1 V3 a1 1 0 0 1 1 -1 H10 a1 1 0 0 1 1 1 V8" stroke="#DFE1E5" stroke-width="1.3"/><path d="M6.5 4.5 H8" stroke="#DFE1E5" stroke-width="1.3"/><path d="M11.3 10.2 a0.6 0.6 0 0 1 0.9 -0.5 L17.3 13.5 a0.6 0.6 0 0 1 0 1 L12.2 18.3 a0.6 0.6 0 0 1 -0.9 -0.5 Z" stroke="#62A368" fill="#253627" stroke-width="1.3"/></svg>
<svg style="position:absolute;left:2068.0px;top:251.0px;overflow:visible;" width="30" height="30" viewBox="0 0 20 20" fill="none" stroke-linecap="round" stroke-linejoin="round"><path d="M3.8 10.6 L8 14.6 L16.2 6.2" stroke="#62A368" stroke-width="2.1"/></svg>
<div style="position:absolute;left:2090px;top:296px;width:14px;height:1131px;background:rgba(255,255,255,0.14);border-radius:7px;"></div>
<svg style="position:absolute;left:2135.0px;top:178.0px;overflow:visible;" width="36" height="36" viewBox="0 0 20 20" fill="none" stroke-linecap="round" stroke-linejoin="round"><path d="M9 17 H4.5 a1 1 0 0 1 -1 -1 V3 a1 1 0 0 1 1 -1 H10 a1 1 0 0 1 1 1 V7" stroke="#CED0D6" stroke-width="1.2"/><path d="M6.5 4.5 H8" stroke="#CED0D6" stroke-width="1.2"/><rect x="9" y="9" width="7.5" height="5" rx="0.5" stroke="#B18BF0" stroke-width="1.2"/><path d="M8 16.5 H17" stroke="#B18BF0" stroke-width="1.2"/><circle cx="17" cy="17" r="2.2" fill="#5FB865" stroke="#2B2D30" stroke-width="0.8"/></svg>
<div id="m2cbe6309" style="position:absolute;left:2176px;top:177.0px;height:40px;line-height:40px;font-family:'Liberation Sans', sans-serif;font-size:27.24px;color:#DFE1E5;font-weight:normal;white-space:pre;">Medium Phone API 36.0</div>
<svg style="position:absolute;left:2489.6px;top:182.0px;overflow:visible;" width="28" height="28" viewBox="0 0 20 20" fill="none" stroke-linecap="round" stroke-linejoin="round"><path d="M6 6 L14 14 M14 6 L6 14" stroke="#8C8F94" stroke-width="1.2"/></svg>
<svg style="position:absolute;left:2541.0px;top:178.0px;overflow:visible;" width="36" height="36" viewBox="0 0 20 20" fill="none" stroke-linecap="round" stroke-linejoin="round"><path d="M10 3.5 V16.5 M3.5 10 H16.5" stroke="#CED0D6" stroke-width="1.2"/></svg>
<svg style="position:absolute;left:2778.5px;top:179.0px;overflow:visible;" width="34" height="34" viewBox="0 0 20 20" fill="none" stroke-linecap="round" stroke-linejoin="round"><path d="M9 3.5 H4.5 a1 1 0 0 0 -1 1 V15.5 a1 1 0 0 0 1 1 H15.5 a1 1 0 0 0 1 -1 V11" stroke="#CED0D6" stroke-width="1.2"/><path d="M11 3.5 H16.5 V9 M16.5 3.5 L9 11" stroke="#CED0D6" stroke-width="1.2"/></svg>
<svg style="position:absolute;left:2830.0px;top:178.0px;overflow:visible;" width="36" height="36" viewBox="0 0 20 20" fill="none" stroke-linecap="round" stroke-linejoin="round"><circle cx="10" cy="4.5" r="1.2" fill="#CED0D6"/><circle cx="10" cy="10" r="1.2" fill="#CED0D6"/><circle cx="10" cy="15.5" r="1.2" fill="#CED0D6"/></svg>
<svg style="position:absolute;left:2882.0px;top:178.0px;overflow:visible;" width="36" height="36" viewBox="0 0 20 20" fill="none" stroke-linecap="round" stroke-linejoin="round"><path d="M3.5 10 H16.5" stroke="#CED0D6" stroke-width="1.2"/></svg>
<div style="position:absolute;left:2112px;top:236px;width:830px;height:2px;background:#1E1F22;border-radius:0px;"></div>
<div style="position:absolute;left:2112px;top:232px;width:421px;height:6px;background:#4E5157;border-radius:3px;"></div>
<svg style="position:absolute;left:2135.0px;top:255.0px;overflow:visible;" width="34" height="34" viewBox="0 0 20 20" fill="none" stroke-linecap="round" stroke-linejoin="round"><path d="M6.5 5.5 a6 6 0 1 0 7 0" stroke="#CED0D6" stroke-width="1.2"/><path d="M10 3 V10" stroke="#CED0D6" stroke-width="1.2"/></svg>
<svg style="position:absolute;left:2185.5px;top:255.0px;overflow:visible;" width="34" height="34" viewBox="0 0 20 20" fill="none" stroke-linecap="round" stroke-linejoin="round"><path d="M3.5 7.5 H6.5 L10.5 4 V16 L6.5 12.5 H3.5 Z" stroke="#CED0D6" stroke-width="1.2"/><path d="M13 7.5 a3.5 3.5 0 0 1 0 5 M15 5.5 a6 6 0 0 1 0 9" stroke="#CED0D6" stroke-width="1.2"/></svg>
<svg style="position:absolute;left:2235.0px;top:255.0px;overflow:visible;" width="34" height="34" viewBox="0 0 20 20" fill="none" stroke-linecap="round" stroke-linejoin="round"><path d="M3.5 7.5 H6.5 L10.5 4 V16 L6.5 12.5 H3.5 Z" stroke="#CED0D6" stroke-width="1.2"/><path d="M13 7.5 a3.5 3.5 0 0 1 0 5" stroke="#CED0D6" stroke-width="1.2"/></svg>
<div style="position:absolute;left:2288px;top:252px;width:2px;height:40px;background:#43454A;border-radius:0px;"></div>
<svg style="position:absolute;left:2305.0px;top:255.0px;overflow:visible;" width="34" height="34" viewBox="0 0 20 20" fill="none" stroke-linecap="round" stroke-linejoin="round"><rect x="3" y="4" width="7.5" height="12" rx="0.8" stroke="#CED0D6" stroke-width="1.2"/><path d="M13.5 4.5 a6 6 0 0 1 0 11" stroke="#548AF7" stroke-width="1.2"/><path d="M12.5 2.5 L13.5 4.5 L11.5 5.5" stroke="#548AF7" stroke-width="1.2"/></svg>
<svg style="position:absolute;left:2357.0px;top:255.0px;overflow:visible;" width="34" height="34" viewBox="0 0 20 20" fill="none" stroke-linecap="round" stroke-linejoin="round"><rect x="9.5" y="4" width="7.5" height="12" rx="0.8" stroke="#CED0D6" stroke-width="1.2"/><path d="M6.5 4.5 a6 6 0 0 0 0 11" stroke="#548AF7" stroke-width="1.2"/><path d="M7.5 2.5 L6.5 4.5 L8.5 5.5" stroke="#548AF7" stroke-width="1.2"/></svg>
<div style="position:absolute;left:2406px;top:252px;width:2px;height:40px;background:#43454A;border-radius:0px;"></div>
<svg style="position:absolute;left:2423.0px;top:255.0px;overflow:visible;" width="34" height="34" viewBox="0 0 20 20" fill="none" stroke-linecap="round" stroke-linejoin="round"><path d="M14.5 4.5 V15.5 L5 10 Z" stroke="#CED0D6" stroke-width="1.2"/></svg>
<svg style="position:absolute;left:2475.0px;top:255.0px;overflow:visible;" width="34" height="34" viewBox="0 0 20 20" fill="none" stroke-linecap="round" stroke-linejoin="round"><circle cx="10" cy="10" r="6" stroke="#CED0D6" stroke-width="1.2"/></svg>
<svg style="position:absolute;left:2527.0px;top:255.0px;overflow:visible;" width="34" height="34" viewBox="0 0 20 20" fill="none" stroke-linecap="round" stroke-linejoin="round"><rect x="4.5" y="4.5" width="11" height="11" rx="0.5" stroke="#CED0D6" stroke-width="1.2"/></svg>
<div style="position:absolute;left:2576px;top:252px;width:2px;height:40px;background:#43454A;border-radius:0px;"></div>
<svg style="position:absolute;left:2596.0px;top:255.0px;overflow:visible;" width="34" height="34" viewBox="0 0 20 20" fill="none" stroke-linecap="round" stroke-linejoin="round"><path d="M8 16.5 H4.5 a1 1 0 0 1 -1 -1 V3 a1 1 0 0 1 1 -1 H10 a1 1 0 0 1 1 1 V8" stroke="#CED0D6" stroke-width="1.2"/><path d="M6 4.5 H7.5" stroke="#CED0D6" stroke-width="1.2"/><g transform="translate(9.5,9.5) scale(0.5)"><path d="M10.00 1.60 L10.37 1.61 L10.73 1.63 L11.09 1.73 L11.39 2.11 L11.65 2.56 L11.86 3.05 L12.04 3.53 L12.19 4.00 L12.32 4.41 L12.54 4.56 L12.77 4.68 L13.00 4.80 L13.22 4.94 L13.44 5.09 L13.69 5.20 L14.11 5.10 L14.58 5.00 L15.09 4.91 L15.62 4.85 L16.14 4.85 L16.62 4.92 L16.88 5.18 L17.08 5.49 L17.27 5.80 L17.45 6.12 L17.61 6.45 L17.71 6.81 L17.53 7.26 L17.27 7.71 L16.95 8.14 L16.62 8.53 L16.29 8.89 L16.00 9.21 L15.98 9.48 L15.99 9.74 L16.00 10.00 L15.99 10.26 L15.98 10.52 L16.00 10.79 L16.29 11.11 L16.62 11.47 L16.95 11.86 L17.27 12.29 L17.53 12.74 L17.71 13.19 L17.61 13.55 L17.45 13.88 L17.27 14.20 L17.08 14.51 L16.88 14.82 L16.62 15.08 L16.14 15.15 L15.62 15.15 L15.09 15.09 L14.58 15.00 L14.11 14.90 L13.69 14.80 L13.44 14.91 L13.22 15.06 L13.00 15.20 L12.77 15.32 L12.54 15.44 L12.32 15.59 L12.19 16.00 L12.04 16.47 L11.86 16.95 L11.65 17.44 L11.39 17.89 L11.09 18.27 L10.73 18.37 L10.37 18.39 L10.00 18.40 L9.63 18.39 L9.27 18.37 L8.91 18.27 L8.61 17.89 L8.35 17.44 L8.14 16.95 L7.96 16.47 L7.81 16.00 L7.68 15.59 L7.46 15.44 L7.23 15.32 L7.00 15.20 L6.78 15.06 L6.56 14.91 L6.31 14.80 L5.89 14.90 L5.42 15.00 L4.91 15.09 L4.38 15.15 L3.86 15.15 L3.38 15.08 L3.12 14.82 L2.92 14.51 L2.73 14.20 L2.55 13.88 L2.39 13.55 L2.29 13.19 L2.47 12.74 L2.73 12.29 L3.05 11.86 L3.38 11.47 L3.71 11.11 L4.00 10.79 L4.02 10.52 L4.01 10.26 L4.00 10.00 L4.01 9.74 L4.02 9.48 L4.00 9.21 L3.71 8.89 L3.38 8.53 L3.05 8.14 L2.73 7.71 L2.47 7.26 L2.29 6.81 L2.39 6.45 L2.55 6.12 L2.73 5.80 L2.92 5.49 L3.12 5.18 L3.38 4.92 L3.86 4.85 L4.38 4.85 L4.91 4.91 L5.42 5.00 L5.89 5.10 L6.31 5.20 L6.56 5.09 L6.78 4.94 L7.00 4.80 L7.23 4.68 L7.46 4.56 L7.68 4.41 L7.81 4.00 L7.96 3.53 L8.14 3.05 L8.35 2.56 L8.61 2.11 L8.91 1.73 L9.27 1.63 L9.63 1.61Z" stroke="#CED0D6" stroke-width="2.2" stroke-linejoin="round"/><circle cx="10" cy="10" r="2.6" stroke="#CED0D6" stroke-width="2.2"/></g></svg>
<svg style="position:absolute;left:2644.0px;top:255.0px;overflow:visible;" width="34" height="34" viewBox="0 0 20 20" fill="none" stroke-linecap="round" stroke-linejoin="round"><rect x="2.5" y="3.5" width="14" height="8.5" rx="1" stroke="#CED0D6" stroke-width="1.2"/><path d="M5 6 H5.5 M7.5 6 H8 M10 6 H10.5 M12.5 6 H13 M5 9 H13" stroke="#CED0D6" stroke-width="1.2"/><rect x="12.5" y="11" width="4.5" height="6.5" rx="2.2" stroke="#CED0D6" stroke-width="1.2"/></svg>
<div style="position:absolute;left:2694px;top:252px;width:2px;height:40px;background:#43454A;border-radius:0px;"></div>
<svg style="position:absolute;left:2711.0px;top:255.0px;overflow:visible;" width="34" height="34" viewBox="0 0 20 20" fill="none" stroke-linecap="round" stroke-linejoin="round"><path d="M2.5 6.5 a1 1 0 0 1 1 -1 H6 L7.5 3.5 H12.5 L14 5.5 H16.5 a1 1 0 0 1 1 1 V15.5 a1 1 0 0 1 -1 1 H3.5 a1 1 0 0 1 -1 -1 Z" stroke="#CED0D6" stroke-width="1.2"/><circle cx="10" cy="10.5" r="3" stroke="#CED0D6" stroke-width="1.2"/></svg>
<svg style="position:absolute;left:2815.0px;top:255.0px;overflow:visible;" width="34" height="34" viewBox="0 0 20 20" fill="none" stroke-linecap="round" stroke-linejoin="round"><path d="M4.5 13 H3.5 a1 1 0 0 1 -1 -1 V3.5 a1 1 0 0 1 1 -1 H13 a1 1 0 0 1 1 1 V5" stroke="#CED0D6" stroke-width="1.2"/><path d="M9 15.5 H6.5 a1 1 0 0 1 -1 -1 V6.5 a1 1 0 0 1 1 -1 H16 a1 1 0 0 1 1 1 V9" stroke="#CED0D6" stroke-width="1.2"/><circle cx="13.5" cy="13" r="2.8" stroke="#CED0D6" stroke-width="1.2"/><path d="M15.5 15 L17.5 17.5" stroke="#CED0D6" stroke-width="1.2"/></svg>
<div style="position:absolute;left:2864px;top:252px;width:2px;height:40px;background:#43454A;border-radius:0px;"></div>
<svg style="position:absolute;left:2884.0px;top:256.0px;overflow:visible;" width="32" height="32" viewBox="0 0 20 20" fill="none" stroke-linecap="round" stroke-linejoin="round"><path d="M3.8 10.6 L8 14.6 L16.2 6.2" stroke="#62A368" stroke-width="2.1"/></svg>
<svg style="position:absolute;left:2135.0px;top:303.0px;overflow:visible;" width="34" height="34" viewBox="0 0 20 20" fill="none" stroke-linecap="round" stroke-linejoin="round"><rect x="2.5" y="5" width="10.5" height="10" rx="0.8" stroke="#CED0D6" stroke-width="1.2"/><path d="M13 8.5 L17.5 5.5 V14.5 L13 11.5" stroke="#CED0D6" stroke-width="1.2"/></svg>
<div style="position:absolute;left:2184px;top:300px;width:2px;height:40px;background:#43454A;border-radius:0px;"></div>
<svg style="position:absolute;left:2201.0px;top:303.0px;overflow:visible;" width="34" height="34" viewBox="0 0 20 20" fill="none" stroke-linecap="round" stroke-linejoin="round"><path d="M3.5 12 V16.5 H16.5 V12 M10 13.5 V3.5 M6 7.5 L10 3.5 L14 7.5" stroke="#CED0D6" stroke-width="1.2"/></svg>
<svg style="position:absolute;left:2252.5px;top:303.0px;overflow:visible;" width="34" height="34" viewBox="0 0 20 20" fill="none" stroke-linecap="round" stroke-linejoin="round"><path d="M3.5 12 V16.5 H16.5 V12 M10 3.5 V13.5 M6 9.5 L10 13.5 L14 9.5" stroke="#CED0D6" stroke-width="1.2"/></svg>
<div style="position:absolute;left:2302px;top:300px;width:2px;height:40px;background:#43454A;border-radius:0px;"></div>
<svg style="position:absolute;left:2319.0px;top:303.0px;overflow:visible;" width="34" height="34" viewBox="0 0 20 20" fill="none" stroke-linecap="round" stroke-linejoin="round"><path d="M4 10 a6 6 0 1 0 1.8 -4.3" stroke="#CED0D6" stroke-width="1.2"/><path d="M5.5 3 V6.2 H8.7" stroke="#CED0D6" stroke-width="1.2"/><path d="M10 7 V10.5 H12.5" stroke="#CED0D6" stroke-width="1.2"/></svg>
<svg style="position:absolute;left:2370.0px;top:302.0px;overflow:visible;" width="36" height="36" viewBox="0 0 20 20" fill="none" stroke-linecap="round" stroke-linejoin="round"><circle cx="10" cy="4.5" r="1.2" fill="#CED0D6"/><circle cx="10" cy="10" r="1.2" fill="#CED0D6"/><circle cx="10" cy="15.5" r="1.2" fill="#CED0D6"/></svg>
<div style="position:absolute;left:2112px;top:354px;width:830px;height:2px;background:#1E1F22;border-radius:0px;"></div>
<div style="position:absolute;left:2216px;top:356px;width:621px;height:1380px;background:#FBF8FE;border-radius:0px;"></div>
<div id="m57877754" style="position:absolute;left:2241px;top:359.0px;height:30px;line-height:30px;font-family:'Liberation Sans', sans-serif;font-size:20.86px;color:#5F6066;font-weight:normal;white-space:pre;">10:52</div>
<div style="position:absolute;left:2304px;top:366px;width:14px;height:17px;background:#5F6066;border-radius:2px;"></div>
<div style="position:absolute;left:2304px;top:365.5px;height:17px;line-height:17px;font-family:'Liberation Sans', sans-serif;font-size:12px;color:#FBF8FE;font-weight:bold;white-space:pre;width:14px;text-align:center">A</div>
<svg style="position:absolute;left:2727px;top:365px;overflow:visible;" width="70" height="20" viewBox="0 0 70 20" fill="none" stroke-linecap="round" stroke-linejoin="round"><path d="M0 5 Q11.5 -4.5 23 5 L11.5 17.5 Z" fill="#5F6066"/><path d="M26 17.5 L44.5 0 V17.5 Z" fill="#5F6066"/><rect x="54.5" y="1.2" width="12" height="18" rx="2" fill="#5F6066"/><rect x="57.5" y="-0.8" width="6" height="3" rx="1" fill="#5F6066"/></svg>
<div id="m160fd12c" style="position:absolute;left:2216px;top:393.0px;height:36px;line-height:36px;font-family:'Liberation Sans', sans-serif;font-size:25.7px;color:#25252A;font-weight:normal;white-space:pre;">Hello Android!</div>
<div style="position:absolute;left:2445px;top:1716px;width:80px;height:5px;background:#5C5D62;border-radius:2px;"></div>
<div style="position:absolute;left:2854px;top:1481px;width:56px;height:170px;background:#2B2D30;border-radius:8px;border:2px solid #393B40;box-sizing:border-box"></div>
<svg style="position:absolute;left:2864.0px;top:1493.0px;overflow:visible;" width="34" height="34" viewBox="0 0 20 20" fill="none" stroke-linecap="round" stroke-linejoin="round"><path d="M10 3.5 V16.5 M3.5 10 H16.5" stroke="#CED0D6" stroke-width="1.2"/></svg>
<svg style="position:absolute;left:2864.0px;top:1544.0px;overflow:visible;" width="34" height="34" viewBox="0 0 20 20" fill="none" stroke-linecap="round" stroke-linejoin="round"><path d="M3.5 10 H16.5" stroke="#6F737A" stroke-width="1.2"/></svg>
<div style="position:absolute;left:2866px;top:1597.0px;height:30px;line-height:30px;font-family:'Liberation Sans', sans-serif;font-size:20px;color:#CED0D6;font-weight:bold;white-space:pre;">1:1</div>
<div id="mabaae729" style="position:absolute;left:106px;top:1759.0px;height:40px;line-height:40px;font-family:'Liberation Sans', sans-serif;font-size:24.72px;color:#DFE1E5;font-weight:bold;white-space:pre;">Build</div>
<div id="mbd8065f6" style="position:absolute;left:224px;top:1759.0px;height:40px;line-height:40px;font-family:'Liberation Sans', sans-serif;font-size:26.99px;color:#DFE1E5;font-weight:normal;white-space:pre;">Sync</div>
<svg style="position:absolute;left:301.7px;top:1765.0px;overflow:visible;" width="28" height="28" viewBox="0 0 20 20" fill="none" stroke-linecap="round" stroke-linejoin="round"><path d="M6 6 L14 14 M14 6 L6 14" stroke="#8C8F94" stroke-width="1.2"/></svg>
<div id="ma0b9c2fc" style="position:absolute;left:370.7px;top:1759.0px;height:40px;line-height:40px;font-family:'Liberation Sans', sans-serif;font-size:27.56px;color:#DFE1E5;font-weight:normal;white-space:pre;">Build Output</div>
<svg style="position:absolute;left:539.7px;top:1765.0px;overflow:visible;" width="28" height="28" viewBox="0 0 20 20" fill="none" stroke-linecap="round" stroke-linejoin="round"><path d="M6 6 L14 14 M14 6 L6 14" stroke="#8C8F94" stroke-width="1.2"/></svg>
<div id="me4f105da" style="position:absolute;left:608px;top:1759.0px;height:40px;line-height:40px;font-family:'Liberation Sans', sans-serif;font-size:27.46px;color:#DFE1E5;font-weight:normal;white-space:pre;">Build Analyzer</div>
<svg style="position:absolute;left:799.5px;top:1765.0px;overflow:visible;" width="28" height="28" viewBox="0 0 20 20" fill="none" stroke-linecap="round" stroke-linejoin="round"><path d="M6 6 L14 14 M14 6 L6 14" stroke="#8C8F94" stroke-width="1.2"/></svg>
<div style="position:absolute;left:346px;top:1814px;width:238px;height:5px;background:#3574F0;border-radius:3px;"></div>
<svg style="position:absolute;left:105.0px;top:1862.0px;overflow:visible;" width="28" height="28" viewBox="0 0 20 20" fill="none" stroke-linecap="round" stroke-linejoin="round"><path d="M8 5.5 L12.5 10 L8 14.5" stroke="#A8ABB0" stroke-width="1.3"/></svg>
<svg style="position:absolute;left:186.0px;top:1839.0px;overflow:visible;" width="28" height="28" viewBox="0 0 20 20" fill="none" stroke-linecap="round" stroke-linejoin="round"><path d="M5.5 8 L10 12.5 L14.5 8" stroke="#A8ABB0" stroke-width="1.3"/></svg>
<svg style="position:absolute;left:226.0px;top:1838.0px;overflow:visible;" width="30" height="30" viewBox="0 0 20 20" fill="none" stroke-linecap="round" stroke-linejoin="round"><path d="M3.8 10.6 L8 14.6 L16.2 6.2" stroke="#62A368" stroke-width="2.2"/></svg>
<div id="mc1515756" style="position:absolute;left:264px;top:1833.0px;height:40px;line-height:40px;font-family:'Liberation Sans', sans-serif;font-size:25.46px;color:#DFE1E5;font-weight:bold;white-space:pre;">Build CobaAplikasi1:</div>
<div id="m7cf3f31b" style="position:absolute;left:526px;top:1833.0px;height:40px;line-height:40px;font-family:'Liberation Sans', sans-serif;font-size:27.77px;color:#DFE1E5;font-weight:normal;white-space:pre;">finished</div>
<div id="m9290fe81" style="position:absolute;left:631px;top:1833.0px;height:40px;line-height:40px;font-family:'Liberation Sans', sans-serif;font-size:27.41px;color:#868A91;font-weight:normal;white-space:pre;">At 14/12/25, 22.52</div>
<div id="m9791c1ae" style="position:absolute;left:877px;top:1833.0px;height:40px;line-height:40px;font-family:'Liberation Sans', sans-serif;font-size:24.72px;color:#868A91;font-weight:normal;white-space:pre;">31 sec, 766 ms</div>
<div style="position:absolute;left:82px;top:1820px;width:996px;height:84px;overflow:hidden">
<div style="position:absolute;left:221px;top:60px;height:40px;line-height:40px;font-family:'Liberation Sans', sans-serif;font-size:27.5px;color:#DFE1E5;white-space:pre">Download info</div>
<svg style="position:absolute;left:184px;top:64px" width="28" height="28" viewBox="0 0 20 20" fill="none" stroke-linecap="round" stroke-linejoin="round"><path d="M10 3 V16 M5.5 11.5 L10 16 L14.5 11.5" stroke="#DFE1E5" stroke-width="1.3"/></svg>
</div>
<div style="position:absolute;left:1102px;top:1815.0px;height:40px;line-height:40px;font-family:'Liberation Mono', monospace;font-size:26px;color:#BCBEC4;font-weight:normal;white-space:pre;">BUILD SUCCESSFUL in 31s</div>
<div style="position:absolute;left:1102px;top:1858.0px;height:40px;line-height:40px;font-family:'Liberation Mono', monospace;font-size:26px;color:#BCBEC4;font-weight:normal;white-space:pre;">36 actionable tasks: 36 executed</div>
<div style="position:absolute;left:27.6px;top:1925px;width:16px;height:16px;background:#2C3551;border-radius:3px;border:2.2px solid #548AF7;box-sizing:border-box"></div>
<div id="m26007722" style="position:absolute;left:52px;top:1913.0px;height:40px;line-height:40px;font-family:'Liberation Sans', sans-serif;font-size:26.72px;color:#A8ABB0;font-weight:normal;white-space:pre;">CobaAplikasi1</div>
<svg style="position:absolute;left:234.0px;top:1920.0px;overflow:visible;" width="26" height="26" viewBox="0 0 20 20" fill="none" stroke-linecap="round" stroke-linejoin="round"><path d="M8 5.5 L12.5 10 L8 14.5" stroke="#A8ABB0" stroke-width="1.2"/></svg>
<div style="position:absolute;left:272px;top:1925px;width:16px;height:16px;background:#2C3551;border-radius:3px;border:2.2px solid #548AF7;box-sizing:border-box"></div>
<div id="mea48684b" style="position:absolute;left:296px;top:1913.0px;height:40px;line-height:40px;font-family:'Liberation Sans', sans-serif;font-size:26.97px;color:#A8ABB0;font-weight:normal;white-space:pre;">app</div>
<svg style="position:absolute;left:354.5px;top:1920.0px;overflow:visible;" width="26" height="26" viewBox="0 0 20 20" fill="none" stroke-linecap="round" stroke-linejoin="round"><path d="M8 5.5 L12.5 10 L8 14.5" stroke="#A8ABB0" stroke-width="1.2"/></svg>
<div id="m188e327a" style="position:absolute;left:392.5px;top:1913.0px;height:40px;line-height:40px;font-family:'Liberation Sans', sans-serif;font-size:27.38px;color:#A8ABB0;font-weight:normal;white-space:pre;">src</div>
<svg style="position:absolute;left:440.0px;top:1920.0px;overflow:visible;" width="26" height="26" viewBox="0 0 20 20" fill="none" stroke-linecap="round" stroke-linejoin="round"><path d="M8 5.5 L12.5 10 L8 14.5" stroke="#A8ABB0" stroke-width="1.2"/></svg>
<div style="position:absolute;left:478px;top:1925px;width:16px;height:16px;background:#2C3551;border-radius:3px;border:2.2px solid #548AF7;box-sizing:border-box"></div>
<div id="m337cbb98" style="position:absolute;left:502.4px;top:1913.0px;height:40px;line-height:40px;font-family:'Liberation Sans', sans-serif;font-size:26.44px;color:#A8ABB0;font-weight:normal;white-space:pre;">main</div>
<svg style="position:absolute;left:572.0px;top:1920.0px;overflow:visible;" width="26" height="26" viewBox="0 0 20 20" fill="none" stroke-linecap="round" stroke-linejoin="round"><path d="M8 5.5 L12.5 10 L8 14.5" stroke="#A8ABB0" stroke-width="1.2"/></svg>
<div id="m40bc0512" style="position:absolute;left:610px;top:1913.0px;height:40px;line-height:40px;font-family:'Liberation Sans', sans-serif;font-size:26.49px;color:#A8ABB0;font-weight:normal;white-space:pre;">java</div>
<svg style="position:absolute;left:670.0px;top:1920.0px;overflow:visible;" width="26" height="26" viewBox="0 0 20 20" fill="none" stroke-linecap="round" stroke-linejoin="round"><path d="M8 5.5 L12.5 10 L8 14.5" stroke="#A8ABB0" stroke-width="1.2"/></svg>
<div id="m8296998b" style="position:absolute;left:708.5px;top:1913.0px;height:40px;line-height:40px;font-family:'Liberation Sans', sans-serif;font-size:26.94px;color:#A8ABB0;font-weight:normal;white-space:pre;">com</div>
<svg style="position:absolute;left:771.3px;top:1920.0px;overflow:visible;" width="26" height="26" viewBox="0 0 20 20" fill="none" stroke-linecap="round" stroke-linejoin="round"><path d="M8 5.5 L12.5 10 L8 14.5" stroke="#A8ABB0" stroke-width="1.2"/></svg>
<div id="md6bf3a1d" style="position:absolute;left:810px;top:1913.0px;height:40px;line-height:40px;font-family:'Liberation Sans', sans-serif;font-size:27.21px;color:#A8ABB0;font-weight:normal;white-space:pre;">example</div>
<svg style="position:absolute;left:924.3px;top:1920.0px;overflow:visible;" width="26" height="26" viewBox="0 0 20 20" fill="none" stroke-linecap="round" stroke-linejoin="round"><path d="M8 5.5 L12.5 10 L8 14.5" stroke="#A8ABB0" stroke-width="1.2"/></svg>
<div style="position:absolute;left:962.3px;top:1913.0px;height:40px;line-height:40px;font-family:'Liberation Sans', sans-serif;font-size:26.6px;color:#A8ABB0;font-weight:normal;white-space:pre;">cobaaplikasi1</div>
<svg style="position:absolute;left:1137.0px;top:1920.0px;overflow:visible;" width="26" height="26" viewBox="0 0 20 20" fill="none" stroke-linecap="round" stroke-linejoin="round"><path d="M8 5.5 L12.5 10 L8 14.5" stroke="#A8ABB0" stroke-width="1.2"/></svg>
<svg style="position:absolute;left:1176.6px;top:1918.0px;overflow:visible;" width="30" height="30" viewBox="0 0 20 20" fill="none" stroke-linecap="round" stroke-linejoin="round"><path d="M3.5 3.5 H16.5 L10 10 L16.5 16.5 H3.5 Z" stroke="#A571E6" fill="none" stroke-width="1.3"/></svg>
<div id="mc326ac7c" style="position:absolute;left:1216.8px;top:1913.0px;height:40px;line-height:40px;font-family:'Liberation Sans', sans-serif;font-size:28.58px;color:#A8ABB0;font-weight:normal;white-space:pre;">MainActivity.kt</div>
<svg style="position:absolute;left:1409.5px;top:1920.0px;overflow:visible;" width="26" height="26" viewBox="0 0 20 20" fill="none" stroke-linecap="round" stroke-linejoin="round"><path d="M8 5.5 L12.5 10 L8 14.5" stroke="#A8ABB0" stroke-width="1.2"/></svg>
<svg style="position:absolute;left:1448.0px;top:1917.0px;overflow:visible;" width="32" height="32" viewBox="0 0 20 20" fill="none" stroke-linecap="round" stroke-linejoin="round"><path d="M15.5 5.5 a7 7 0 1 0 0 9" stroke="#548AF7" stroke-width="1.4"/><path d="M10 10 H17.5 L14 13.5 L17.5 17 H10 Z" stroke="#A571E6" fill="#2B2D30" stroke-width="1.2"/></svg>
<div id="m60a10212" style="position:absolute;left:1488px;top:1913.0px;height:40px;line-height:40px;font-family:'Liberation Sans', sans-serif;font-size:28.19px;color:#A8ABB0;font-weight:normal;white-space:pre;">MainActivity</div>
<svg style="position:absolute;left:1650.6px;top:1920.0px;overflow:visible;" width="26" height="26" viewBox="0 0 20 20" fill="none" stroke-linecap="round" stroke-linejoin="round"><path d="M8 5.5 L12.5 10 L8 14.5" stroke="#A8ABB0" stroke-width="1.2"/></svg>
<svg style="position:absolute;left:1687.5px;top:1917.0px;overflow:visible;" width="32" height="32" viewBox="0 0 20 20" fill="none" stroke-linecap="round" stroke-linejoin="round"><circle cx="10" cy="10" r="7.5" stroke="#E55765" stroke-width="1.3"/><path d="M6.5 13.5 V8 M6.5 9 a1.8 1.8 0 0 1 3.5 0 V13.5 M10 9 a1.8 1.8 0 0 1 3.5 0 V13.5" stroke="#E55765" stroke-width="1.2"/></svg>
<div id="ma3c1742e" style="position:absolute;left:1727.6px;top:1913.0px;height:40px;line-height:40px;font-family:'Liberation Sans', sans-serif;font-size:27.47px;color:#A8ABB0;font-weight:normal;white-space:pre;">onCreate</div>
<div id="m4b3a4e62" style="position:absolute;left:2373px;top:1913.0px;height:40px;line-height:40px;font-family:'Liberation Sans', sans-serif;font-size:26.18px;color:#A8ABB0;font-weight:normal;white-space:pre;">20:21</div>
<div id="m2b813d91" style="position:absolute;left:2471px;top:1913.0px;height:40px;line-height:40px;font-family:'Liberation Sans', sans-serif;font-size:23.91px;color:#A8ABB0;font-weight:normal;white-space:pre;">LF</div>
<div id="m90b8fde6" style="position:absolute;left:2533px;top:1913.0px;height:40px;line-height:40px;font-family:'Liberation Sans', sans-serif;font-size:27.11px;color:#A8ABB0;font-weight:normal;white-space:pre;">UTF-8</div>
<svg style="position:absolute;left:2644.0px;top:1916.0px;overflow:visible;" width="34" height="34" viewBox="0 0 20 20" fill="none" stroke-linecap="round" stroke-linejoin="round"><path d="M3 7 H11 M3 11 H11 M3 15 H9" stroke="#A8ABB0" stroke-width="1.4"/><circle cx="15" cy="5.5" r="3" stroke="#A8ABB0" stroke-width="1.2"/><path d="M13 7.5 L17 3.5" stroke="#A8ABB0" stroke-width="1.2"/></svg>
<svg style="position:absolute;left:2708.0px;top:1915.0px;overflow:visible;" width="36" height="36" viewBox="0 0 20 20" fill="none" stroke-linecap="round" stroke-linejoin="round"><path d="M9 17.5 H4.5 a1 1 0 0 1 -1 -1 V6 L7 2.5 H13.5 a1 1 0 0 1 1 1 V9" stroke="#A8ABB0" stroke-width="1.2"/><g transform="translate(9.5,10) scale(0.45)"><path d="M10.00 1.60 L10.37 1.61 L10.73 1.63 L11.09 1.73 L11.39 2.11 L11.65 2.56 L11.86 3.05 L12.04 3.53 L12.19 4.00 L12.32 4.41 L12.54 4.56 L12.77 4.68 L13.00 4.80 L13.22 4.94 L13.44 5.09 L13.69 5.20 L14.11 5.10 L14.58 5.00 L15.09 4.91 L15.62 4.85 L16.14 4.85 L16.62 4.92 L16.88 5.18 L17.08 5.49 L17.27 5.80 L17.45 6.12 L17.61 6.45 L17.71 6.81 L17.53 7.26 L17.27 7.71 L16.95 8.14 L16.62 8.53 L16.29 8.89 L16.00 9.21 L15.98 9.48 L15.99 9.74 L16.00 10.00 L15.99 10.26 L15.98 10.52 L16.00 10.79 L16.29 11.11 L16.62 11.47 L16.95 11.86 L17.27 12.29 L17.53 12.74 L17.71 13.19 L17.61 13.55 L17.45 13.88 L17.27 14.20 L17.08 14.51 L16.88 14.82 L16.62 15.08 L16.14 15.15 L15.62 15.15 L15.09 15.09 L14.58 15.00 L14.11 14.90 L13.69 14.80 L13.44 14.91 L13.22 15.06 L13.00 15.20 L12.77 15.32 L12.54 15.44 L12.32 15.59 L12.19 16.00 L12.04 16.47 L11.86 16.95 L11.65 17.44 L11.39 17.89 L11.09 18.27 L10.73 18.37 L10.37 18.39 L10.00 18.40 L9.63 18.39 L9.27 18.37 L8.91 18.27 L8.61 17.89 L8.35 17.44 L8.14 16.95 L7.96 16.47 L7.81 16.00 L7.68 15.59 L7.46 15.44 L7.23 15.32 L7.00 15.20 L6.78 15.06 L6.56 14.91 L6.31 14.80 L5.89 14.90 L5.42 15.00 L4.91 15.09 L4.38 15.15 L3.86 15.15 L3.38 15.08 L3.12 14.82 L2.92 14.51 L2.73 14.20 L2.55 13.88 L2.39 13.55 L2.29 13.19 L2.47 12.74 L2.73 12.29 L3.05 11.86 L3.38 11.47 L3.71 11.11 L4.00 10.79 L4.02 10.52 L4.01 10.26 L4.00 10.00 L4.01 9.74 L4.02 9.48 L4.00 9.21 L3.71 8.89 L3.38 8.53 L3.05 8.14 L2.73 7.71 L2.47 7.26 L2.29 6.81 L2.39 6.45 L2.55 6.12 L2.73 5.80 L2.92 5.49 L3.12 5.18 L3.38 4.92 L3.86 4.85 L4.38 4.85 L4.91 4.91 L5.42 5.00 L5.89 5.10 L6.31 5.20 L6.56 5.09 L6.78 4.94 L7.00 4.80 L7.23 4.68 L7.46 4.56 L7.68 4.41 L7.81 4.00 L7.96 3.53 L8.14 3.05 L8.35 2.56 L8.61 2.11 L8.91 1.73 L9.27 1.63 L9.63 1.61Z" stroke="#A8ABB0" stroke-width="2.6" stroke-linejoin="round"/><circle cx="10" cy="10" r="2.6" stroke="#A8ABB0" stroke-width="2.6"/></g></svg>
<div id="m2635f96f" style="position:absolute;left:2749px;top:1913.0px;height:40px;line-height:40px;font-family:'Liberation Sans', sans-serif;font-size:27.29px;color:#A8ABB0;font-weight:normal;white-space:pre;">4 spaces</div>
<svg style="position:absolute;left:2892.5px;top:1916.0px;overflow:visible;" width="34" height="34" viewBox="0 0 20 20" fill="none" stroke-linecap="round" stroke-linejoin="round"><rect x="3" y="9" width="10" height="8" rx="1" stroke="#A8ABB0" stroke-width="1.3"/><path d="M10 9 V6 a3 3 0 0 1 6 0 V7" stroke="#A8ABB0" stroke-width="1.3"/><path d="M8 12 V14" stroke="#A8ABB0" stroke-width="1.4"/></svg>
<svg style="position:absolute;left:2954.6px;top:1916.0px;overflow:visible;" width="34" height="34" viewBox="0 0 20 20" fill="none" stroke-linecap="round" stroke-linejoin="round"><circle cx="10" cy="10" r="8.5" stroke="#A8ABB0" stroke-width="1.3"/><path d="M10 5.3 V10.6" stroke="#A8ABB0" stroke-width="1.6"/><circle cx="10" cy="13.9" r="1.05" fill="#A8ABB0"/></svg>
<div style="position:absolute;left:2182px;top:1613px;width:740px;height:103px;background:#393B40;border-radius:12px;border:1.5px solid #43454A;box-sizing:border-box;box-shadow:0 2px 8px rgba(0,0,0,0.35)"></div>
<svg style="position:absolute;left:2209.0px;top:1641.0px;overflow:visible;" width="34" height="34" viewBox="0 0 20 20" fill="none" stroke-linecap="round" stroke-linejoin="round"><circle cx="10" cy="10" r="8" fill="#548AF7"/><rect x="9" y="8.5" width="2" height="6" rx="1" fill="#FFF"/><circle cx="10" cy="6" r="1.1" fill="#FFF"/></svg>
<div id="mf027ffd7" style="position:absolute;left:2258px;top:1638.0px;height:40px;line-height:40px;font-family:'Liberation Sans', sans-serif;font-size:27.52px;color:#DFE1E5;font-weight:normal;white-space:pre;">Install successfully finished in 1 s 254 ms</div>
<svg style="position:absolute;left:2814.0px;top:1628.0px;overflow:visible;" width="36" height="36" viewBox="0 0 20 20" fill="none" stroke-linecap="round" stroke-linejoin="round"><circle cx="10" cy="4.5" r="1.2" fill="#CED0D6"/><circle cx="10" cy="10" r="1.2" fill="#CED0D6"/><circle cx="10" cy="15.5" r="1.2" fill="#CED0D6"/></svg>
<div style="position:absolute;left:2868px;top:1626px;width:40px;height:40px;background:#4A4C51;border-radius:6px;"></div>
<svg style="position:absolute;left:2868.0px;top:1626.0px;overflow:visible;" width="40" height="40" viewBox="0 0 20 20" fill="none" stroke-linecap="round" stroke-linejoin="round"><path d="M6 6 L14 14 M14 6 L6 14" stroke="#CED0D6" stroke-width="1.0"/></svg>
<div style="position:absolute;left:2182px;top:1737px;width:740px;height:148px;background:#393B40;border-radius:12px;border:1.5px solid #43454A;box-sizing:border-box;box-shadow:0 2px 8px rgba(0,0,0,0.35)"></div>
<svg style="position:absolute;left:2209.0px;top:1765.0px;overflow:visible;" width="34" height="34" viewBox="0 0 20 20" fill="none" stroke-linecap="round" stroke-linejoin="round"><circle cx="10" cy="10" r="8" fill="#548AF7"/><rect x="9" y="8.5" width="2" height="6" rx="1" fill="#FFF"/><circle cx="10" cy="6" r="1.1" fill="#FFF"/></svg>
<div id="m8986e3f3" style="position:absolute;left:2258px;top:1762.0px;height:40px;line-height:40px;font-family:'Liberation Sans', sans-serif;font-size:27.72px;color:#DFE1E5;font-weight:normal;white-space:pre;">IDE project settings can be added to Git</div>
<div id="mf15978c2" style="position:absolute;left:2258px;top:1807.0px;height:40px;line-height:40px;font-family:'Liberation Sans', sans-serif;font-size:26.96px;color:#6B9BFA;font-weight:normal;white-space:pre;">View Files</div>
<div id="ma61e6656" style="position:absolute;left:2414.5px;top:1807.0px;height:40px;line-height:40px;font-family:'Liberation Sans', sans-serif;font-size:27.79px;color:#6B9BFA;font-weight:normal;white-space:pre;">Always Add</div>
<div id="m6973aad3" style="position:absolute;left:2590px;top:1807.0px;height:40px;line-height:40px;font-family:'Liberation Sans', sans-serif;font-size:27.68px;color:#6B9BFA;font-weight:normal;white-space:pre;">Don't Ask Again</div>
<div style="position:absolute;left:2511px;top:1676px;width:520px;height:69px;background:#393B40;border-radius:10px;border:1.5px solid #1E1F22;box-sizing:border-box;box-shadow:0 3px 10px rgba(0,0,0,0.4)"></div>
<div id="m909bc287" style="position:absolute;left:2536px;top:1690.0px;height:40px;line-height:40px;font-family:'Liberation Sans', sans-serif;font-size:27.58px;color:#DFE1E5;font-weight:normal;white-space:pre;">Close. ⌥click to close all notifications</div></body></html>
